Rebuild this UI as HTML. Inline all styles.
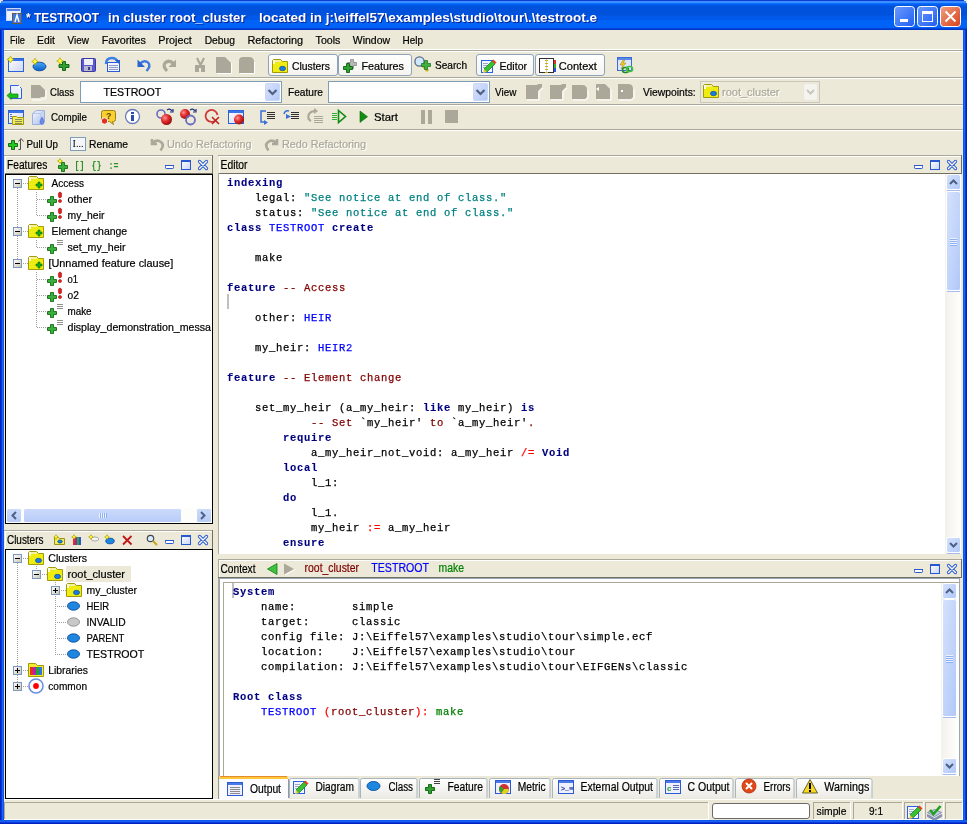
<!DOCTYPE html>
<html><head><meta charset="utf-8"><style>
html,body{margin:0;padding:0;background:#ece9d8;overflow:hidden}
svg{display:block;will-change:transform}
</style></head><body>
<svg width="967" height="824" viewBox="0 0 967 824" font-family="'Liberation Sans', sans-serif">
<rect x="0" y="0" width="967" height="824" fill="#ece9d8" />
<rect x="0" y="0" width="967" height="1" fill="#0a3fd4" />
<rect x="0" y="1" width="967" height="1" fill="#3d8bff" />
<rect x="0" y="2" width="967" height="1" fill="#3992ff" />
<rect x="0" y="3" width="967" height="1" fill="#0a6cff" />
<rect x="0" y="4" width="967" height="1" fill="#0260f0" />
<rect x="0" y="5" width="967" height="1" fill="#0058e4" />
<rect x="0" y="6" width="967" height="1" fill="#0052dc" />
<rect x="0" y="7" width="967" height="1" fill="#0052dc" />
<rect x="0" y="8" width="967" height="1" fill="#0052dc" />
<rect x="0" y="9" width="967" height="1" fill="#0052dc" />
<rect x="0" y="10" width="967" height="1" fill="#0052dc" />
<rect x="0" y="11" width="967" height="1" fill="#0052dc" />
<rect x="0" y="12" width="967" height="1" fill="#0052dc" />
<rect x="0" y="13" width="967" height="1" fill="#0052dc" />
<rect x="0" y="14" width="967" height="1" fill="#0052dc" />
<rect x="0" y="15" width="967" height="1" fill="#0054e2" />
<rect x="0" y="16" width="967" height="1" fill="#0059ea" />
<rect x="0" y="17" width="967" height="1" fill="#0059ea" />
<rect x="0" y="18" width="967" height="1" fill="#0059ea" />
<rect x="0" y="19" width="967" height="1" fill="#0059ea" />
<rect x="0" y="20" width="967" height="1" fill="#0063f8" />
<rect x="0" y="21" width="967" height="1" fill="#0063f8" />
<rect x="0" y="22" width="967" height="1" fill="#0063f8" />
<rect x="0" y="23" width="967" height="1" fill="#0063f8" />
<rect x="0" y="24" width="967" height="1" fill="#0063f8" />
<rect x="0" y="25" width="967" height="1" fill="#0063f8" />
<rect x="0" y="26" width="967" height="1" fill="#0063f8" />
<rect x="0" y="27" width="967" height="1" fill="#0060f4" />
<rect x="0" y="28" width="967" height="1" fill="#0046dc" />
<rect x="0" y="29" width="967" height="1" fill="#0035c6" />
<rect x="0" y="0" width="1" height="1" fill="#e8e4d4" />
<rect x="1" y="0" width="1" height="1" fill="#e8e4d4" />
<rect x="0" y="1" width="1" height="1" fill="#e8e4d4" />
<rect x="2" y="0" width="1" height="1" fill="#e8e4d4" />
<rect x="0" y="2" width="1" height="1" fill="#e8e4d4" />
<rect x="966" y="0" width="1" height="1" fill="#e8e4d4" />
<rect x="965" y="0" width="1" height="1" fill="#e8e4d4" />
<rect x="966" y="1" width="1" height="1" fill="#e8e4d4" />
<rect x="964" y="0" width="1" height="1" fill="#e8e4d4" />
<rect x="966" y="2" width="1" height="1" fill="#e8e4d4" />
<rect x="1" y="1" width="1" height="1" fill="#6a8de0" />
<rect x="965" y="1" width="1" height="1" fill="#6a8de0" />
<rect x="0" y="30" width="1" height="794" fill="#0020c0" />
<rect x="1" y="30" width="1" height="794" fill="#0838d8" />
<rect x="2" y="30" width="1" height="794" fill="#1a66f4" />
<rect x="3" y="30" width="1" height="794" fill="#0a58ec" />
<rect x="963" y="30" width="1" height="794" fill="#0a58ec" />
<rect x="964" y="30" width="1" height="794" fill="#1a66f4" />
<rect x="965" y="30" width="1" height="794" fill="#0838d8" />
<rect x="966" y="30" width="1" height="794" fill="#0020c0" />
<rect x="0" y="820" width="967" height="1" fill="#0a58ec" />
<rect x="0" y="821" width="967" height="1" fill="#1a60ee" />
<rect x="0" y="822" width="967" height="1" fill="#0838d8" />
<rect x="0" y="823" width="967" height="1" fill="#0020c0" />
<rect x="6.5" y="8.5" width="14" height="12" fill="#eef2ff" stroke="#c8d4f8"/>
<rect x="7" y="9" width="13" height="2" fill="#5a7fe0" />
<rect x="12.5" y="13.5" width="9" height="10" fill="#3a78e8" stroke="#6a5a40"/>
<path d="M15 22 L17 15 L19 22" stroke="#fff" stroke-width="1.4" fill="none"/>
<text x="27" y="23" font-size="13" font-weight="bold" fill="#0a1e8c" textLength="73" lengthAdjust="spacingAndGlyphs" >* TESTROOT</text>
<text x="109" y="23" font-size="13" font-weight="bold" fill="#0a1e8c" textLength="137.5" lengthAdjust="spacingAndGlyphs" >in cluster root_cluster</text>
<text x="260" y="23" font-size="13" font-weight="bold" fill="#0a1e8c" textLength="338" lengthAdjust="spacingAndGlyphs" >located in j:\eiffel57\examples\studio\tour\.\testroot.e</text>
<text x="26" y="22" font-size="13" font-weight="bold" fill="#ffffff" textLength="73" lengthAdjust="spacingAndGlyphs" >* TESTROOT</text>
<text x="108" y="22" font-size="13" font-weight="bold" fill="#ffffff" textLength="137.5" lengthAdjust="spacingAndGlyphs" >in cluster root_cluster</text>
<text x="259" y="22" font-size="13" font-weight="bold" fill="#ffffff" textLength="338" lengthAdjust="spacingAndGlyphs" >located in j:\eiffel57\examples\studio\tour\.\testroot.e</text>
<defs><linearGradient id="tb894" x1="0" y1="0" x2="1" y2="1"><stop offset="0" stop-color="#6c9cff"/><stop offset="1" stop-color="#1f5ef0"/></linearGradient></defs>
<rect x="894.5" y="6.5" width="20" height="20" rx="3" fill="url(#tb894)" stroke="#ffffff"/>
<defs><linearGradient id="tb917" x1="0" y1="0" x2="1" y2="1"><stop offset="0" stop-color="#6c9cff"/><stop offset="1" stop-color="#1f5ef0"/></linearGradient></defs>
<rect x="917.5" y="6.5" width="20" height="20" rx="3" fill="url(#tb917)" stroke="#ffffff"/>
<defs><linearGradient id="tb940" x1="0" y1="0" x2="1" y2="1"><stop offset="0" stop-color="#f0a080"/><stop offset="1" stop-color="#d8401a"/></linearGradient></defs>
<rect x="940.5" y="6.5" width="20" height="20" rx="3" fill="url(#tb940)" stroke="#ffffff"/>
<rect x="900" y="19" width="8" height="3" fill="#fff" />
<rect x="922.5" y="11.5" width="10" height="10" fill="none" stroke="#fff"/>
<rect x="922" y="11" width="11" height="3" fill="#fff" />
<path d="M945.5 11.5 L955.5 21.5 M955.5 11.5 L945.5 21.5" stroke="#fff" stroke-width="2"/>
<text x="10" y="44" font-size="11" stroke="#000" stroke-width="0.2" textLength="14.8" lengthAdjust="spacingAndGlyphs" >File</text>
<text x="37" y="44" font-size="11" stroke="#000" stroke-width="0.2" textLength="17.8" lengthAdjust="spacingAndGlyphs" >Edit</text>
<text x="67.5" y="44" font-size="11" stroke="#000" stroke-width="0.2" textLength="21.3" lengthAdjust="spacingAndGlyphs" >View</text>
<text x="101.7" y="44" font-size="11" stroke="#000" stroke-width="0.2" textLength="44.3" lengthAdjust="spacingAndGlyphs" >Favorites</text>
<text x="158.3" y="44" font-size="11" stroke="#000" stroke-width="0.2" textLength="33.5" lengthAdjust="spacingAndGlyphs" >Project</text>
<text x="204.7" y="44" font-size="11" stroke="#000" stroke-width="0.2" textLength="30.3" lengthAdjust="spacingAndGlyphs" >Debug</text>
<text x="247.4" y="44" font-size="11" stroke="#000" stroke-width="0.2" textLength="55.8" lengthAdjust="spacingAndGlyphs" >Refactoring</text>
<text x="315.6" y="44" font-size="11" stroke="#000" stroke-width="0.2" textLength="24.8" lengthAdjust="spacingAndGlyphs" >Tools</text>
<text x="352.8" y="44" font-size="11" stroke="#000" stroke-width="0.2" textLength="37.2" lengthAdjust="spacingAndGlyphs" >Window</text>
<text x="402.5" y="44" font-size="11" stroke="#000" stroke-width="0.2" textLength="20.5" lengthAdjust="spacingAndGlyphs" >Help</text>
<rect x="4" y="49" width="959" height="1" fill="#ffffff" />
<rect x="4" y="50" width="959" height="1" fill="#aca899" />
<rect x="4" y="51" width="959" height="1" fill="#ffffff" />
<rect x="4" y="77" width="959" height="1" fill="#aca899" />
<rect x="4" y="78" width="959" height="1" fill="#ffffff" />
<rect x="4" y="104" width="959" height="1" fill="#aca899" />
<rect x="4" y="105" width="959" height="1" fill="#ffffff" />
<rect x="4" y="129" width="959" height="1" fill="#aca899" />
<rect x="4" y="130" width="959" height="1" fill="#ffffff" />
<defs><linearGradient id="wbody" x1="0" y1="0" x2="1" y2="1"><stop offset="0" stop-color="#ffffff"/><stop offset="1" stop-color="#d0d4f4"/></linearGradient><linearGradient id="ellg" x1="0" y1="0" x2="0" y2="1"><stop offset="0" stop-color="#4aa8f8"/><stop offset="1" stop-color="#0a60c8"/></linearGradient></defs>
<rect x="8.5" y="58.5" width="15" height="13" fill="url(#wbody)" stroke="#2a62d8"/>
<rect x="9" y="59" width="14" height="2" fill="#3a72e8" />
<path d="M10.5 56.1 L11.69 58.31 L13.9 59.5 L11.69 60.69 L10.5 62.9 L9.31 60.69 L7.1 59.5 L9.31 58.31 Z" fill="#ffff40" stroke="#b0a000" stroke-width="0.7"/>
<ellipse cx="39.5" cy="66.5" rx="6.5" ry="4.3" fill="url(#ellg)" stroke="#0a4aa0" stroke-width="0.9"/>
<path d="M35 58.2 L36.155 60.345 L38.3 61.5 L36.155 62.655 L35 64.8 L33.845 62.655 L31.7 61.5 L33.845 60.345 Z" fill="#ffff40" stroke="#b0a000" stroke-width="0.7"/>
<path d="M62.5 61.5 h3 v3 h3.5 v3 h-3.5 v3 h-3 v-3 h-3.5 v-3 h3.5 z" fill="#30a030" stroke="#0a600a" stroke-width="0.9"/>
<path d="M60 57.7 L61.155 59.845 L63.3 61 L61.155 62.155 L60 64.3 L58.845 62.155 L56.7 61 L58.845 59.845 Z" fill="#ffff40" stroke="#b0a000" stroke-width="0.7"/>
<rect x="81.5" y="58.5" width="14" height="13" rx="1" fill="#5a5ad0" stroke="#3a3aa0"/>
<rect x="84" y="59" width="9" height="6" fill="#f0f0f8" />
<rect x="84" y="66" width="8" height="5" fill="#b8b8c8" />
<rect x="88" y="67" width="2" height="3" fill="#3a3aa0" />
<rect x="107.5" y="62.5" width="12" height="9" fill="#f4f6ff" stroke="#2a5ad8"/>
<rect x="109" y="65" width="9" height="1" fill="#8a9ac8" />
<rect x="109" y="67" width="9" height="1" fill="#8a9ac8" />
<rect x="109" y="69" width="9" height="1" fill="#8a9ac8" />
<path d="M106 64 q0 -6 6 -6 q4 0 6 4" stroke="#3a80e8" stroke-width="2.4" fill="none"/>
<path d="M115 60 h5 v5 z" fill="#2a62d0"/>
<path d="M139.5 64 q5 -5 9 -1 q2.5 3 -2 8" stroke="#3a78e0" stroke-width="2.4" fill="none"/>
<path d="M137.5 59.5 v7.5 h7.5 z" fill="#2a62d0"/>
<path d="M174 64 q-5 -5 -9 -1 q-2.5 3 2 8" stroke="#aca899" stroke-width="3.2" fill="none"/>
<path d="M176 59.5 v7.5 h-7.5 z" fill="#aca899"/>
<path d="M197 58 l3.5 7 l3.5 -7" stroke="#aca899" stroke-width="2.2" fill="none"/>
<rect x="195" y="65" width="4" height="7" fill="#aca899"/><rect x="201" y="65" width="4" height="7" fill="#aca899"/><rect x="198" y="65" width="4" height="3" fill="#aca899"/>
<path d="M216 57 h9 l6 6 v10 h-15 z" fill="#aca899"/>
<rect x="217" y="73" width="15" height="1" fill="#ffffff" />
<rect x="231" y="63" width="1" height="10" fill="#ffffff" />
<path d="M239 61 q0 -4 4 -4 h6 q5 0 5 5 v11 h-15 z" fill="#aca899"/>
<rect x="240" y="73" width="15" height="1" fill="#ffffff" />
<rect x="254" y="62" width="1" height="11" fill="#ffffff" />
<defs><linearGradient id="tg268" x1="0" y1="0" x2="0" y2="1"><stop offset="0" stop-color="#ffffff"/><stop offset="1" stop-color="#f4f3ee"/></linearGradient></defs>
<rect x="268.5" y="54.5" width="69" height="21" rx="2.5" fill="url(#tg268)" stroke="#8ea3bb"/>
<path d="M272.5 72.5 V60.5 L273.5 59.5 H280.5 L282.5 61.5 H287.5 V72.5 Z" fill="#eeec10" stroke="#a29a08"/>
<rect x="273" y="60" width="8" height="2" fill="#f4f0a0" />
<rect x="273" y="60" width="2" height="4" fill="#fcfce0" />
<ellipse cx="282.5" cy="68.5" rx="3" ry="2.2" fill="#1a7ae0" stroke="#0a4aa8" stroke-width="0.7"/>
<text x="292" y="70" font-size="11" stroke="#000" stroke-width="0.2" textLength="38" lengthAdjust="spacingAndGlyphs" >Clusters</text>
<defs><linearGradient id="tg338" x1="0" y1="0" x2="0" y2="1"><stop offset="0" stop-color="#ffffff"/><stop offset="1" stop-color="#f4f3ee"/></linearGradient></defs>
<rect x="338.5" y="54.5" width="73" height="21" rx="2.5" fill="url(#tg338)" stroke="#8ea3bb"/>
<path d="M350.5 59.5 h3 v3 h3 v3 h-3 v3 h-3 v-3 h-3 v-3 h3 z" fill="#b8b8b8" stroke="#8a8a8a" stroke-width="0.8"/>
<path d="M346.5 63.5 h3 v3 h3 v3 h-3 v3 h-3 v-3 h-3 v-3 h3 z" fill="#30a030" stroke="#0a600a" stroke-width="0.9"/>
<text x="361.4" y="70" font-size="11" stroke="#000" stroke-width="0.2" textLength="42.6" lengthAdjust="spacingAndGlyphs" >Features</text>
<path d="M422 65 l6 6" stroke="#c8b818" stroke-width="2.8"/>
<circle cx="419.5" cy="61.5" r="4.6" fill="#d0e8ff" stroke="#5a6a80" stroke-width="1.3"/>
<path d="M424.5 60.5 h3 v3 h3 v3 h-3 v3 h-3 v-3 h-3 v-3 h3 z" fill="#40b040" stroke="#207a20" stroke-width="0.8"/>
<text x="435" y="69" font-size="11" stroke="#000" stroke-width="0.2" textLength="32" lengthAdjust="spacingAndGlyphs" >Search</text>
<defs><linearGradient id="tg476" x1="0" y1="0" x2="0" y2="1"><stop offset="0" stop-color="#ffffff"/><stop offset="1" stop-color="#f4f3ee"/></linearGradient></defs>
<rect x="476.5" y="54.5" width="57" height="21" rx="2.5" fill="url(#tg476)" stroke="#8ea3bb"/>
<rect x="481.5" y="60.5" width="11" height="12" fill="#f2f4ff" stroke="#2a62e0"/>
<rect x="483" y="63" width="5" height="1" fill="#a0a8c8" />
<rect x="483" y="65" width="5" height="1" fill="#a0a8c8" />
<rect x="483" y="67" width="5" height="1" fill="#a0a8c8" />
<path d="M484 69 L492 61 L495 64 L487 72 Z" fill="#38c030" stroke="#107a10" stroke-width="0.7"/>
<path d="M484 69 L487 72 L483 73 Z" fill="#e8d040"/>
<path d="M492 61 L493.5 59.5 L496.5 62.5 L495 64 Z" fill="#e84020"/>
<text x="499.5" y="70" font-size="11" stroke="#000" stroke-width="0.2" textLength="27.5" lengthAdjust="spacingAndGlyphs" >Editor</text>
<defs><linearGradient id="tg535" x1="0" y1="0" x2="0" y2="1"><stop offset="0" stop-color="#ffffff"/><stop offset="1" stop-color="#f4f3ee"/></linearGradient></defs>
<rect x="535.5" y="54.5" width="69" height="21" rx="2.5" fill="url(#tg535)" stroke="#8ea3bb"/>
<rect x="539.5" y="58.5" width="14" height="14" fill="#ffffff" stroke="#303030"/>
<rect x="546" y="59" width="1" height="13" fill="#d0d0d0" />
<rect x="545" y="60" width="3" height="1" fill="#c8b020" />
<rect x="545" y="63" width="3" height="1" fill="#c8b020" />
<rect x="545" y="66" width="3" height="1" fill="#c8b020" />
<rect x="545" y="69" width="3" height="1" fill="#c8b020" />
<rect x="545" y="72" width="3" height="1" fill="#c8b020" />
<rect x="554" y="60" width="2" height="4" fill="#e03030" />
<rect x="554" y="64" width="2" height="4" fill="#30b030" />
<rect x="554" y="68" width="2" height="4" fill="#3050e0" />
<text x="558.8" y="70" font-size="11" stroke="#000" stroke-width="0.2" textLength="38.1" lengthAdjust="spacingAndGlyphs" >Context</text>
<rect x="617.5" y="57.5" width="14" height="13" fill="#dce6ff" stroke="#3a6ad8"/>
<rect x="618" y="58" width="13" height="2" fill="#5a8ae8" />
<path d="M623 60 l-3 5 h3 l-2 4 l5 -6 h-3 l2 -3 z" fill="#f0d020" stroke="#a08010" stroke-width="0.5"/>
<rect x="622.5" y="67.5" width="6" height="5" rx="2.5" fill="none" stroke="#208a20" stroke-width="1.6"/>
<rect x="626.5" y="66.5" width="6" height="5" rx="2.5" fill="none" stroke="#40c040" stroke-width="1.6"/>
<path d="M10.5 85.5 h8 l3 3 v10 h-11 z" fill="#eef0ff" stroke="#2a62e0"/>
<rect x="18" y="86" width="2" height="2" fill="#ffffff" />
<path d="M7 95.5 l4 -3.5 v2 h7 v3.5 h-7 v2 z" fill="#18c018" stroke="#0a800a" stroke-width="0.7"/>
<path d="M31 85 h9 l5 5 v6 l-1 1 h-3 l-1 1 h-9 z" fill="#aca899"/>
<path d="M32 100 h9 l1 -1 h3 l1 -1 v-8" stroke="#fff" fill="none"/>
<text x="50" y="96" font-size="11" stroke="#000" stroke-width="0.2" textLength="24" lengthAdjust="spacingAndGlyphs" >Class</text>
<rect x="80" y="81" width="202" height="22" fill="#ffffff" />
<rect x="80" y="81" width="202" height="1" fill="#7f9db9" />
<rect x="80" y="102" width="202" height="1" fill="#7f9db9" />
<rect x="80" y="81" width="1" height="22" fill="#7f9db9" />
<rect x="281" y="81" width="1" height="22" fill="#7f9db9" />
<defs><linearGradient id="cb80" x1="0" y1="0" x2="1" y2="1"><stop offset="0" stop-color="#d8e2fc"/><stop offset="1" stop-color="#b4c8f6"/></linearGradient></defs>
<rect x="265.5" y="83.5" width="14" height="17" rx="1.5" fill="url(#cb80)" stroke="#c8d6f8"/>
<path d="M268.5 90 l4 4 l4 -4" stroke="#4d6185" stroke-width="2.2" fill="none"/>
<text x="103.5" y="96" font-size="11" stroke="#000" stroke-width="0.2" textLength="57.8" lengthAdjust="spacingAndGlyphs" >TESTROOT</text>
<text x="288" y="96" font-size="11" stroke="#000" stroke-width="0.2" textLength="35" lengthAdjust="spacingAndGlyphs" >Feature</text>
<rect x="328" y="81" width="162" height="22" fill="#ffffff" />
<rect x="328" y="81" width="162" height="1" fill="#7f9db9" />
<rect x="328" y="102" width="162" height="1" fill="#7f9db9" />
<rect x="328" y="81" width="1" height="22" fill="#7f9db9" />
<rect x="489" y="81" width="1" height="22" fill="#7f9db9" />
<defs><linearGradient id="cb328" x1="0" y1="0" x2="1" y2="1"><stop offset="0" stop-color="#d8e2fc"/><stop offset="1" stop-color="#b4c8f6"/></linearGradient></defs>
<rect x="473.5" y="83.5" width="14" height="17" rx="1.5" fill="url(#cb328)" stroke="#c8d6f8"/>
<path d="M476.5 90 l4 4 l4 -4" stroke="#4d6185" stroke-width="2.2" fill="none"/>
<text x="495" y="96" font-size="11" stroke="#000" stroke-width="0.2" textLength="21.3" lengthAdjust="spacingAndGlyphs" >View</text>
<path d="M526 85 h11 l1 -1 h4 v3 l-4 4 v8 h-12 z" fill="#aca899"/>
<path d="M527 100 h12 v-8 l4 -4" stroke="#fff" fill="none"/>
<path d="M550 85 h11 l1 -1 h4 v3 l-4 4 v8 h-12 z" fill="#aca899"/>
<path d="M551 100 h12 v-8 l4 -4" stroke="#fff" fill="none"/>
<path d="M572 85 h10 q5 0 5 5 v7 l-2 2 h-13 z" fill="#aca899"/>
<path d="M573 100 h13 l2 -2 v-8" stroke="#fff" fill="none"/>
<path d="M596 84 h9 l5 5 v10 h-14 z" fill="#aca899"/>
<path d="M597 100 h14 v-11" stroke="#fff" fill="none"/>
<path d="M596 89 l3 -2 v4 z" fill="#fff"/>
<path d="M618 84 h10 q5 0 5 5 v8 l-2 2 h-13 z" fill="#aca899"/>
<path d="M619 100 h13 l2 -2 v-9" stroke="#fff" fill="none"/>
<rect x="621" y="90" width="2" height="2" fill="#fff" />
<text x="643" y="96" font-size="11" stroke="#000" stroke-width="0.2" textLength="52.7" lengthAdjust="spacingAndGlyphs" >Viewpoints:</text>
<rect x="700" y="81" width="120" height="22" fill="#ece9d8" />
<rect x="700" y="81" width="120" height="1" fill="#c9c7ba" />
<rect x="700" y="102" width="120" height="1" fill="#c9c7ba" />
<rect x="700" y="81" width="1" height="22" fill="#c9c7ba" />
<rect x="819" y="81" width="1" height="22" fill="#c9c7ba" />
<rect x="803.5" y="83.5" width="14" height="17" rx="1.5" fill="#f4f3ee" stroke="#e8e6dc"/>
<path d="M807 90 l3.5 3.5 l3.5 -3.5" stroke="#c9c7ba" stroke-width="2" fill="none"/>
<path d="M703.5 97.5 V85.5 L704.5 84.5 H711.5 L713.5 86.5 H718.5 V97.5 Z" fill="#eeec10" stroke="#a29a08"/>
<rect x="704" y="85" width="8" height="2" fill="#f4f0a0" />
<rect x="704" y="85" width="2" height="4" fill="#fcfce0" />
<ellipse cx="713.5" cy="93.5" rx="3" ry="2.2" fill="#1a7ae0" stroke="#0a4aa8" stroke-width="0.7"/>
<text x="723" y="97" font-size="11" fill="#ffffff" stroke="#ffffff" stroke-width="0.2" textLength="57.5" lengthAdjust="spacingAndGlyphs" >root_cluster</text>
<text x="722" y="96" font-size="11" fill="#aca899" stroke="#aca899" stroke-width="0.2" textLength="57.5" lengthAdjust="spacingAndGlyphs" >root_cluster</text>
<rect x="8.5" y="110.5" width="15" height="13" fill="url(#wbody)" stroke="#2a62d8"/>
<rect x="9" y="111" width="14" height="2" fill="#3a72e8" />
<rect x="10" y="114" width="2" height="1" fill="#4a6ac8" />
<rect x="10" y="116" width="2" height="1" fill="#4a6ac8" />
<rect x="10" y="118" width="2" height="1" fill="#4a6ac8" />
<path d="M12.5 124.5 V116.5 h4 l1 1 h6 v7 z" fill="#eeec60" stroke="#a29a08"/>
<rect x="15" y="119" width="7" height="1" fill="#8a8a50" />
<rect x="15" y="121" width="7" height="1" fill="#8a8a50" />
<rect x="15" y="123" width="7" height="1" fill="#8a8a50" />
<defs><linearGradient id="cube" x1="0" y1="0" x2="1" y2="1"><stop offset="0" stop-color="#f4f8ff"/><stop offset="1" stop-color="#a8bce8"/></linearGradient></defs>
<path d="M32.5 113.5 l4 -3 h8 v11 l-4 3 h-8 z" fill="url(#cube)" stroke="#9ab0e0"/>
<path d="M32.5 113.5 h8 l4 -3 M40.5 113.5 v11" stroke="#b8c8f0" fill="none"/>
<path d="M42 117 q-2.5 4 -2 5.5 a2 2 0 0 0 4 0 q0.5 -1.5 -2 -5.5 z" fill="#6a8ae8" stroke="#4a6ad0" stroke-width="0.5"/>
<text x="51" y="121" font-size="11" stroke="#000" stroke-width="0.2" textLength="36" lengthAdjust="spacingAndGlyphs" >Compile</text>
<path d="M101.5 112.5 q0 -2 2 -2 h10 q2 0 2 2 v7 q0 2 -2 2 h-1 l1 3 l-4 -3 h-6 q-2 0 -2 -2 z" fill="#f8d030" stroke="#a08010"/>
<text x="106" y="119" font-size="9" font-weight="bold" fill="#604000" >?</text>
<circle cx="104.5" cy="121" r="3.2" fill="#e03020" stroke="#fff" stroke-width="0.9"/>
<circle cx="132.5" cy="116.5" r="7" fill="#ffffff" stroke="#6a7ab8" stroke-width="1.3"/>
<rect x="131" y="112" width="3" height="2" fill="#2a4ab0" />
<rect x="131" y="115" width="3" height="6" fill="#2a4ab0" />
<defs><radialGradient id="rball" cx="0.35" cy="0.35" r="0.7"><stop offset="0" stop-color="#ff9090"/><stop offset="0.5" stop-color="#e02828"/><stop offset="1" stop-color="#901010"/></radialGradient></defs>
<circle cx="161" cy="114" r="4" fill="none" stroke="#6a6ac0" stroke-width="1.6"/>
<circle cx="166.5" cy="119.5" r="5.5" fill="url(#rball)"/>
<path d="M167 110 q3 -2 5 1 M170 112 h3 v-3" stroke="#203080" stroke-width="1.2" fill="none"/>
<circle cx="185" cy="114" r="5" fill="url(#rball)"/>
<circle cx="190.5" cy="120" r="4.5" fill="none" stroke="#6a6ac0" stroke-width="1.8"/>
<path d="M190 110 q3 -2 5 1 M193 112 h3 v-3" stroke="#203080" stroke-width="1.2" fill="none"/>
<path d="M216 120 a6 6 0 1 1 1.5 -5" stroke="#d03838" stroke-width="1.8" fill="none"/>
<path d="M212 117 l7 7 M219 117 l-7 7" stroke="#c02020" stroke-width="1.6"/>
<rect x="228.5" y="110.5" width="15" height="13" fill="url(#wbody)" stroke="#2a62d8"/>
<rect x="229" y="111" width="14" height="2" fill="#3a72e8" />
<circle cx="239" cy="119.5" r="5" fill="url(#rball)"/>
<rect x="267" y="112" width="8" height="1" fill="#303030" />
<rect x="267" y="114" width="8" height="1" fill="#303030" />
<rect x="267" y="116" width="8" height="1" fill="#303030" />
<rect x="267" y="118" width="8" height="1" fill="#303030" />
<rect x="291" y="112" width="8" height="1" fill="#303030" />
<rect x="291" y="114" width="8" height="1" fill="#303030" />
<rect x="291" y="116" width="8" height="1" fill="#303030" />
<rect x="291" y="118" width="8" height="1" fill="#303030" />
<path d="M266 111 h-5 v11 h5" stroke="#3a70d8" stroke-width="1.5" fill="none"/>
<path d="M264 120 l4 2.5 l-4 2.5 z" fill="#3a70d8"/>
<path d="M284 114 q1 -4 5 -3" stroke="#3a70d8" stroke-width="1.5" fill="none"/>
<path d="M286 114 l5 2.5 l-5 2.5 z" fill="#3a70d8"/>
<rect x="314" y="116" width="9" height="1" fill="#aca899" />
<rect x="314" y="118" width="9" height="1" fill="#aca899" />
<rect x="314" y="120" width="9" height="1" fill="#aca899" />
<rect x="314" y="122" width="9" height="1" fill="#aca899" />
<path d="M311 121 q-4 -2 -2 -7 q2 -3 6 -3" stroke="#aca899" stroke-width="2.2" fill="none"/>
<path d="M314 108 l4 3 l-4 3 z" fill="#aca899"/>
<rect x="332" y="113" width="5" height="1" fill="#30b030" />
<rect x="332" y="115" width="5" height="1" fill="#30b030" />
<rect x="332" y="117" width="5" height="1" fill="#30b030" />
<rect x="332" y="119" width="5" height="1" fill="#30b030" />
<path d="M338.5 110.5 l7 6 l-7 6 z" fill="none" stroke="#108a10" stroke-width="1.6"/>
<path d="M360 111 l7.5 5.7 l-7.5 5.7 z" fill="#109010" stroke="#0a600a" stroke-width="0.6"/>
<text x="374" y="121" font-size="11" stroke="#000" stroke-width="0.2" textLength="24" lengthAdjust="spacingAndGlyphs" >Start</text>
<rect x="421" y="110" width="4" height="14" fill="#aca899" />
<rect x="428" y="110" width="4" height="14" fill="#aca899" />
<rect x="445" y="110" width="13" height="13" fill="#aca899" />
<path d="M11.5 140.5 h3 v3 h3 v3 h-3 v3 h-3 v-3 h-3 v-3 h3 z" fill="#20c820" stroke="#0a600a" stroke-width="0.9"/>
<path d="M18.5 149.5 h2 v-10" stroke="#505050" stroke-width="1" fill="none"/>
<path d="M18.5 141.5 l2.5 -3 l2.5 3" stroke="#505050" stroke-width="1" fill="none"/>
<text x="26.5" y="148" font-size="11" stroke="#000" stroke-width="0.2" textLength="31.5" lengthAdjust="spacingAndGlyphs" >Pull Up</text>
<rect x="70.5" y="137.5" width="15" height="13" fill="#f4f6fa" stroke="#7f9db9"/>
<text x="72.5" y="147" font-size="10" font-family="Liberation Serif" textLength="11" lengthAdjust="spacingAndGlyphs" >I...</text>
<text x="89" y="148" font-size="11" stroke="#000" stroke-width="0.2" textLength="39" lengthAdjust="spacingAndGlyphs" >Rename</text>
<path d="M152 139 v5 h5 M152.5 143.5 q4 -5 9 -1 q3 3 -1 8" stroke="#aca899" stroke-width="2.6" fill="none"/>
<text x="168" y="149" font-size="11" fill="#ffffff" stroke="#ffffff" stroke-width="0.2" textLength="84.6" lengthAdjust="spacingAndGlyphs" >Undo Refactoring</text>
<text x="167" y="148" font-size="11" fill="#aca899" stroke="#aca899" stroke-width="0.2" textLength="84.6" lengthAdjust="spacingAndGlyphs" >Undo Refactoring</text>
<path d="M277 139 v5 h-5 M276.5 143.5 q-4 -5 -9 -1 q-3 3 1 8" stroke="#aca899" stroke-width="2.6" fill="none"/>
<text x="283" y="149" font-size="11" fill="#ffffff" stroke="#ffffff" stroke-width="0.2" textLength="84" lengthAdjust="spacingAndGlyphs" >Redo Refactoring</text>
<text x="282" y="148" font-size="11" fill="#aca899" stroke="#aca899" stroke-width="0.2" textLength="84" lengthAdjust="spacingAndGlyphs" >Redo Refactoring</text>
<rect x="4" y="155" width="209" height="1" fill="#aca899" />
<rect x="5" y="156" width="207" height="1" fill="#ffffff" />
<rect x="5" y="156" width="1" height="17" fill="#ffffff" />
<rect x="212" y="155" width="1" height="18" fill="#716f64" />
<text x="7" y="169" font-size="12" stroke="#000" stroke-width="0.2" textLength="40.3" lengthAdjust="spacingAndGlyphs" >Features</text>
<path d="M61.5 162.5 h3 v3 h3 v3 h-3 v3 h-3 v-3 h-3 v-3 h3 z" fill="#3cb03c" stroke="#0e700e" stroke-width="0.9"/>
<path d="M60 158.5 L60.875 160.125 L62.5 161 L60.875 161.875 L60 163.5 L59.125 161.875 L57.5 161 L59.125 160.125 Z" fill="#ffff40" stroke="#b0a000" stroke-width="0.7"/>
<text x="74.5" y="169" font-size="11" font-family="Liberation Mono" font-weight="bold" fill="#2a902a" textLength="10" lengthAdjust="spacingAndGlyphs" >[]</text>
<text x="91.5" y="169" font-size="11" font-family="Liberation Mono" font-weight="bold" fill="#2a902a" textLength="10" lengthAdjust="spacingAndGlyphs" >{}</text>
<text x="108.5" y="169" font-size="11" font-family="Liberation Mono" font-weight="bold" fill="#2a902a" textLength="10" lengthAdjust="spacingAndGlyphs" >:=</text>
<rect x="165.5" y="165.5" width="8" height="3" rx="0.8" fill="#ffffff" stroke="#2858d0"/>
<rect x="165" y="165" width="9" height="1" fill="#2858d0" />
<defs><linearGradient id="mx181_160" x1="0" y1="0" x2="1" y2="1"><stop offset="0" stop-color="#ffffff"/><stop offset="1" stop-color="#c8d4f8"/></linearGradient></defs>
<rect x="181.5" y="160.5" width="9" height="9" fill="url(#mx181_160)" stroke="#2858d0"/>
<rect x="182" y="161" width="8" height="1" fill="#2858d0" />
<path d="M199.5 161.5 L206.5 168.5 M206.5 161.5 L199.5 168.5" stroke="#2858d0" stroke-width="3.2" stroke-linecap="round"/>
<path d="M199.5 161.5 L206.5 168.5 M206.5 161.5 L199.5 168.5" stroke="#ffffff" stroke-width="1.4" stroke-linecap="round"/>
<rect x="5" y="173" width="208" height="1" fill="#000000" />
<rect x="5" y="523" width="208" height="1" fill="#000000" />
<rect x="5" y="173" width="1" height="351" fill="#000000" />
<rect x="212" y="173" width="1" height="351" fill="#000000" />
<rect x="5" y="173" width="208" height="1" fill="#716f64" />
<rect x="5" y="174" width="208" height="1" fill="#000000" />
<rect x="6" y="175" width="206" height="348" fill="#ffffff" />
<rect x="6" y="508" width="206" height="15" fill="#fdfdfa" />
<defs><linearGradient id="hs508" x1="0" y1="0" x2="0" y2="1"><stop offset="0" stop-color="#cddbfb"/><stop offset="1" stop-color="#b6cbf7"/></linearGradient></defs>
<rect x="6.5" y="508.5" width="15" height="14" rx="2" fill="url(#hs508)" stroke="#ffffff"/>
<path d="M16 512 l-3.5 3.5 l3.5 3.5" stroke="#4d6185" stroke-width="2" fill="none"/>
<rect x="196.5" y="508.5" width="15" height="14" rx="2" fill="url(#hs508)" stroke="#ffffff"/>
<path d="M201 512 l3.5 3.5 l-3.5 3.5" stroke="#4d6185" stroke-width="2" fill="none"/>
<rect x="23.5" y="508.5" width="158" height="14" rx="2" fill="url(#hs508)" stroke="#ffffff"/>
<rect x="99" y="513" width="1" height="5" fill="#eef3ff" />
<rect x="100" y="513" width="1" height="5" fill="#8cb0f8" />
<rect x="101" y="513" width="1" height="5" fill="#eef3ff" />
<rect x="102" y="513" width="1" height="5" fill="#8cb0f8" />
<rect x="103" y="513" width="1" height="5" fill="#eef3ff" />
<rect x="104" y="513" width="1" height="5" fill="#8cb0f8" />
<rect x="105" y="513" width="1" height="5" fill="#eef3ff" />
<rect x="106" y="513" width="1" height="5" fill="#8cb0f8" />
<clipPath id="ftclip"><rect x="6" y="174" width="206" height="334"/></clipPath><g clip-path="url(#ftclip)">
<rect x="17" y="188" width="1" height="1" fill="#a0a0a0" />
<rect x="17" y="190" width="1" height="1" fill="#a0a0a0" />
<rect x="17" y="192" width="1" height="1" fill="#a0a0a0" />
<rect x="17" y="194" width="1" height="1" fill="#a0a0a0" />
<rect x="17" y="196" width="1" height="1" fill="#a0a0a0" />
<rect x="17" y="198" width="1" height="1" fill="#a0a0a0" />
<rect x="17" y="200" width="1" height="1" fill="#a0a0a0" />
<rect x="17" y="202" width="1" height="1" fill="#a0a0a0" />
<rect x="17" y="204" width="1" height="1" fill="#a0a0a0" />
<rect x="17" y="206" width="1" height="1" fill="#a0a0a0" />
<rect x="17" y="208" width="1" height="1" fill="#a0a0a0" />
<rect x="17" y="210" width="1" height="1" fill="#a0a0a0" />
<rect x="17" y="212" width="1" height="1" fill="#a0a0a0" />
<rect x="17" y="214" width="1" height="1" fill="#a0a0a0" />
<rect x="17" y="216" width="1" height="1" fill="#a0a0a0" />
<rect x="17" y="218" width="1" height="1" fill="#a0a0a0" />
<rect x="17" y="220" width="1" height="1" fill="#a0a0a0" />
<rect x="17" y="222" width="1" height="1" fill="#a0a0a0" />
<rect x="17" y="224" width="1" height="1" fill="#a0a0a0" />
<rect x="17" y="226" width="1" height="1" fill="#a0a0a0" />
<rect x="17" y="228" width="1" height="1" fill="#a0a0a0" />
<rect x="17" y="230" width="1" height="1" fill="#a0a0a0" />
<rect x="17" y="232" width="1" height="1" fill="#a0a0a0" />
<rect x="17" y="234" width="1" height="1" fill="#a0a0a0" />
<rect x="17" y="236" width="1" height="1" fill="#a0a0a0" />
<rect x="17" y="238" width="1" height="1" fill="#a0a0a0" />
<rect x="17" y="240" width="1" height="1" fill="#a0a0a0" />
<rect x="17" y="242" width="1" height="1" fill="#a0a0a0" />
<rect x="17" y="244" width="1" height="1" fill="#a0a0a0" />
<rect x="17" y="246" width="1" height="1" fill="#a0a0a0" />
<rect x="17" y="248" width="1" height="1" fill="#a0a0a0" />
<rect x="17" y="250" width="1" height="1" fill="#a0a0a0" />
<rect x="17" y="252" width="1" height="1" fill="#a0a0a0" />
<rect x="17" y="254" width="1" height="1" fill="#a0a0a0" />
<rect x="17" y="256" width="1" height="1" fill="#a0a0a0" />
<rect x="17" y="258" width="1" height="1" fill="#a0a0a0" />
<rect x="17" y="260" width="1" height="1" fill="#a0a0a0" />
<rect x="17" y="262" width="1" height="1" fill="#a0a0a0" />
<rect x="17" y="264" width="1" height="1" fill="#a0a0a0" />
<rect x="17" y="266" width="1" height="1" fill="#a0a0a0" />
<defs><linearGradient id="ex13_179" x1="0" y1="0" x2="1" y2="1"><stop offset="0" stop-color="#ffffff"/><stop offset="1" stop-color="#c8c4b0"/></linearGradient></defs>
<rect x="13.5" y="179.5" width="8" height="8" fill="url(#ex13_179)" stroke="#7a98c0"/>
<rect x="15" y="183" width="5" height="1" fill="#000" />
<rect x="23" y="183" width="1" height="1" fill="#a0a0a0" />
<rect x="25" y="183" width="1" height="1" fill="#a0a0a0" />
<rect x="27" y="183" width="1" height="1" fill="#a0a0a0" />
<path d="M28.5 189.5 V177.5 L29.5 176.5 H36.5 L38.5 178.5 H43.5 V189.5 Z" fill="#eeec10" stroke="#a29a08"/>
<rect x="29" y="177" width="8" height="2" fill="#f4f0a0" />
<rect x="29" y="177" width="2" height="4" fill="#fcfce0" />
<path d="M38 182 h2 v2 h2 v2 h-2 v2 h-2 v-2 h-2 v-2 h2 z" fill="#18a818" stroke="#0a700a" stroke-width="0.6"/>
<text x="51.6" y="187" font-size="11" stroke="#000" stroke-width="0.2" textLength="32.4" lengthAdjust="spacingAndGlyphs" >Access</text>
<rect x="37" y="199" width="1" height="1" fill="#a0a0a0" />
<rect x="39" y="199" width="1" height="1" fill="#a0a0a0" />
<rect x="41" y="199" width="1" height="1" fill="#a0a0a0" />
<rect x="43" y="199" width="1" height="1" fill="#a0a0a0" />
<rect x="45" y="199" width="1" height="1" fill="#a0a0a0" />
<path d="M50.5 196.5 h3 v3 h3 v3 h-3 v3 h-3 v-3 h-3 v-3 h3 z" fill="#3cb03c" stroke="#0e700e" stroke-width="0.9"/>
<ellipse cx="60" cy="195" rx="1.7" ry="3" fill="#e02020" stroke="#901010" stroke-width="0.5"/>
<circle cx="60" cy="201" r="1.6" fill="#e02020" stroke="#901010" stroke-width="0.5"/>
<text x="67.5" y="203" font-size="11" stroke="#000" stroke-width="0.2" textLength="24.6" lengthAdjust="spacingAndGlyphs" >other</text>
<rect x="37" y="215" width="1" height="1" fill="#a0a0a0" />
<rect x="39" y="215" width="1" height="1" fill="#a0a0a0" />
<rect x="41" y="215" width="1" height="1" fill="#a0a0a0" />
<rect x="43" y="215" width="1" height="1" fill="#a0a0a0" />
<rect x="45" y="215" width="1" height="1" fill="#a0a0a0" />
<path d="M50.5 212.5 h3 v3 h3 v3 h-3 v3 h-3 v-3 h-3 v-3 h3 z" fill="#3cb03c" stroke="#0e700e" stroke-width="0.9"/>
<ellipse cx="60" cy="211" rx="1.7" ry="3" fill="#e02020" stroke="#901010" stroke-width="0.5"/>
<circle cx="60" cy="217" r="1.6" fill="#e02020" stroke="#901010" stroke-width="0.5"/>
<text x="67.5" y="219" font-size="11" stroke="#000" stroke-width="0.2" textLength="36.9" lengthAdjust="spacingAndGlyphs" >my_heir</text>
<defs><linearGradient id="ex13_227" x1="0" y1="0" x2="1" y2="1"><stop offset="0" stop-color="#ffffff"/><stop offset="1" stop-color="#c8c4b0"/></linearGradient></defs>
<rect x="13.5" y="227.5" width="8" height="8" fill="url(#ex13_227)" stroke="#7a98c0"/>
<rect x="15" y="231" width="5" height="1" fill="#000" />
<rect x="23" y="231" width="1" height="1" fill="#a0a0a0" />
<rect x="25" y="231" width="1" height="1" fill="#a0a0a0" />
<rect x="27" y="231" width="1" height="1" fill="#a0a0a0" />
<path d="M28.5 237.5 V225.5 L29.5 224.5 H36.5 L38.5 226.5 H43.5 V237.5 Z" fill="#eeec10" stroke="#a29a08"/>
<rect x="29" y="225" width="8" height="2" fill="#f4f0a0" />
<rect x="29" y="225" width="2" height="4" fill="#fcfce0" />
<path d="M38 230 h2 v2 h2 v2 h-2 v2 h-2 v-2 h-2 v-2 h2 z" fill="#18a818" stroke="#0a700a" stroke-width="0.6"/>
<text x="51.6" y="235" font-size="11" stroke="#000" stroke-width="0.2" textLength="75.6" lengthAdjust="spacingAndGlyphs" >Element change</text>
<rect x="37" y="247" width="1" height="1" fill="#a0a0a0" />
<rect x="39" y="247" width="1" height="1" fill="#a0a0a0" />
<rect x="41" y="247" width="1" height="1" fill="#a0a0a0" />
<rect x="43" y="247" width="1" height="1" fill="#a0a0a0" />
<rect x="45" y="247" width="1" height="1" fill="#a0a0a0" />
<path d="M50.5 244.5 h3 v3 h3 v3 h-3 v3 h-3 v-3 h-3 v-3 h3 z" fill="#3cb03c" stroke="#0e700e" stroke-width="0.9"/>
<rect x="57" y="240" width="6" height="1" fill="#909090" />
<rect x="57" y="242" width="6" height="1" fill="#909090" />
<rect x="57" y="244" width="6" height="1" fill="#909090" />
<text x="67.5" y="251" font-size="11" stroke="#000" stroke-width="0.2" textLength="58" lengthAdjust="spacingAndGlyphs" >set_my_heir</text>
<defs><linearGradient id="ex13_259" x1="0" y1="0" x2="1" y2="1"><stop offset="0" stop-color="#ffffff"/><stop offset="1" stop-color="#c8c4b0"/></linearGradient></defs>
<rect x="13.5" y="259.5" width="8" height="8" fill="url(#ex13_259)" stroke="#7a98c0"/>
<rect x="15" y="263" width="5" height="1" fill="#000" />
<rect x="23" y="263" width="1" height="1" fill="#a0a0a0" />
<rect x="25" y="263" width="1" height="1" fill="#a0a0a0" />
<rect x="27" y="263" width="1" height="1" fill="#a0a0a0" />
<path d="M28.5 269.5 V257.5 L29.5 256.5 H36.5 L38.5 258.5 H43.5 V269.5 Z" fill="#eeec10" stroke="#a29a08"/>
<rect x="29" y="257" width="8" height="2" fill="#f4f0a0" />
<rect x="29" y="257" width="2" height="4" fill="#fcfce0" />
<path d="M38 262 h2 v2 h2 v2 h-2 v2 h-2 v-2 h-2 v-2 h2 z" fill="#18a818" stroke="#0a700a" stroke-width="0.6"/>
<text x="48.4" y="267" font-size="11" stroke="#000" stroke-width="0.2" textLength="124.8" lengthAdjust="spacingAndGlyphs" >[Unnamed feature clause]</text>
<rect x="37" y="279" width="1" height="1" fill="#a0a0a0" />
<rect x="39" y="279" width="1" height="1" fill="#a0a0a0" />
<rect x="41" y="279" width="1" height="1" fill="#a0a0a0" />
<rect x="43" y="279" width="1" height="1" fill="#a0a0a0" />
<rect x="45" y="279" width="1" height="1" fill="#a0a0a0" />
<path d="M50.5 276.5 h3 v3 h3 v3 h-3 v3 h-3 v-3 h-3 v-3 h3 z" fill="#3cb03c" stroke="#0e700e" stroke-width="0.9"/>
<ellipse cx="60" cy="275" rx="1.7" ry="3" fill="#e02020" stroke="#901010" stroke-width="0.5"/>
<circle cx="60" cy="281" r="1.6" fill="#e02020" stroke="#901010" stroke-width="0.5"/>
<text x="67.5" y="283" font-size="11" stroke="#000" stroke-width="0.2" textLength="10.6" lengthAdjust="spacingAndGlyphs" >o1</text>
<rect x="37" y="295" width="1" height="1" fill="#a0a0a0" />
<rect x="39" y="295" width="1" height="1" fill="#a0a0a0" />
<rect x="41" y="295" width="1" height="1" fill="#a0a0a0" />
<rect x="43" y="295" width="1" height="1" fill="#a0a0a0" />
<rect x="45" y="295" width="1" height="1" fill="#a0a0a0" />
<path d="M50.5 292.5 h3 v3 h3 v3 h-3 v3 h-3 v-3 h-3 v-3 h3 z" fill="#3cb03c" stroke="#0e700e" stroke-width="0.9"/>
<ellipse cx="60" cy="291" rx="1.7" ry="3" fill="#e02020" stroke="#901010" stroke-width="0.5"/>
<circle cx="60" cy="297" r="1.6" fill="#e02020" stroke="#901010" stroke-width="0.5"/>
<text x="67.5" y="299" font-size="11" stroke="#000" stroke-width="0.2" textLength="11.4" lengthAdjust="spacingAndGlyphs" >o2</text>
<rect x="37" y="311" width="1" height="1" fill="#a0a0a0" />
<rect x="39" y="311" width="1" height="1" fill="#a0a0a0" />
<rect x="41" y="311" width="1" height="1" fill="#a0a0a0" />
<rect x="43" y="311" width="1" height="1" fill="#a0a0a0" />
<rect x="45" y="311" width="1" height="1" fill="#a0a0a0" />
<path d="M50.5 308.5 h3 v3 h3 v3 h-3 v3 h-3 v-3 h-3 v-3 h3 z" fill="#3cb03c" stroke="#0e700e" stroke-width="0.9"/>
<rect x="57" y="304" width="6" height="1" fill="#909090" />
<rect x="57" y="306" width="6" height="1" fill="#909090" />
<rect x="57" y="308" width="6" height="1" fill="#909090" />
<text x="67.5" y="315" font-size="11" stroke="#000" stroke-width="0.2" textLength="24.1" lengthAdjust="spacingAndGlyphs" >make</text>
<rect x="37" y="327" width="1" height="1" fill="#a0a0a0" />
<rect x="39" y="327" width="1" height="1" fill="#a0a0a0" />
<rect x="41" y="327" width="1" height="1" fill="#a0a0a0" />
<rect x="43" y="327" width="1" height="1" fill="#a0a0a0" />
<rect x="45" y="327" width="1" height="1" fill="#a0a0a0" />
<path d="M50.5 324.5 h3 v3 h3 v3 h-3 v3 h-3 v-3 h-3 v-3 h3 z" fill="#3cb03c" stroke="#0e700e" stroke-width="0.9"/>
<rect x="57" y="320" width="6" height="1" fill="#909090" />
<rect x="57" y="322" width="6" height="1" fill="#909090" />
<rect x="57" y="324" width="6" height="1" fill="#909090" />
<text x="67.5" y="331" font-size="11" stroke="#000" stroke-width="0.2" textLength="143.5" lengthAdjust="spacingAndGlyphs" >display_demonstration_messa</text>
<rect x="36" y="192" width="1" height="1" fill="#a0a0a0" />
<rect x="36" y="194" width="1" height="1" fill="#a0a0a0" />
<rect x="36" y="196" width="1" height="1" fill="#a0a0a0" />
<rect x="36" y="198" width="1" height="1" fill="#a0a0a0" />
<rect x="36" y="200" width="1" height="1" fill="#a0a0a0" />
<rect x="36" y="202" width="1" height="1" fill="#a0a0a0" />
<rect x="36" y="204" width="1" height="1" fill="#a0a0a0" />
<rect x="36" y="206" width="1" height="1" fill="#a0a0a0" />
<rect x="36" y="208" width="1" height="1" fill="#a0a0a0" />
<rect x="36" y="210" width="1" height="1" fill="#a0a0a0" />
<rect x="36" y="212" width="1" height="1" fill="#a0a0a0" />
<rect x="36" y="214" width="1" height="1" fill="#a0a0a0" />
<rect x="36" y="240" width="1" height="1" fill="#a0a0a0" />
<rect x="36" y="242" width="1" height="1" fill="#a0a0a0" />
<rect x="36" y="244" width="1" height="1" fill="#a0a0a0" />
<rect x="36" y="246" width="1" height="1" fill="#a0a0a0" />
<rect x="36" y="272" width="1" height="1" fill="#a0a0a0" />
<rect x="36" y="274" width="1" height="1" fill="#a0a0a0" />
<rect x="36" y="276" width="1" height="1" fill="#a0a0a0" />
<rect x="36" y="278" width="1" height="1" fill="#a0a0a0" />
<rect x="36" y="280" width="1" height="1" fill="#a0a0a0" />
<rect x="36" y="282" width="1" height="1" fill="#a0a0a0" />
<rect x="36" y="284" width="1" height="1" fill="#a0a0a0" />
<rect x="36" y="286" width="1" height="1" fill="#a0a0a0" />
<rect x="36" y="288" width="1" height="1" fill="#a0a0a0" />
<rect x="36" y="290" width="1" height="1" fill="#a0a0a0" />
<rect x="36" y="292" width="1" height="1" fill="#a0a0a0" />
<rect x="36" y="294" width="1" height="1" fill="#a0a0a0" />
<rect x="36" y="296" width="1" height="1" fill="#a0a0a0" />
<rect x="36" y="298" width="1" height="1" fill="#a0a0a0" />
<rect x="36" y="300" width="1" height="1" fill="#a0a0a0" />
<rect x="36" y="302" width="1" height="1" fill="#a0a0a0" />
<rect x="36" y="304" width="1" height="1" fill="#a0a0a0" />
<rect x="36" y="306" width="1" height="1" fill="#a0a0a0" />
<rect x="36" y="308" width="1" height="1" fill="#a0a0a0" />
<rect x="36" y="310" width="1" height="1" fill="#a0a0a0" />
<rect x="36" y="312" width="1" height="1" fill="#a0a0a0" />
<rect x="36" y="314" width="1" height="1" fill="#a0a0a0" />
<rect x="36" y="316" width="1" height="1" fill="#a0a0a0" />
<rect x="36" y="318" width="1" height="1" fill="#a0a0a0" />
<rect x="36" y="320" width="1" height="1" fill="#a0a0a0" />
<rect x="36" y="322" width="1" height="1" fill="#a0a0a0" />
<rect x="36" y="324" width="1" height="1" fill="#a0a0a0" />
<rect x="36" y="326" width="1" height="1" fill="#a0a0a0" />
</g>
<rect x="4" y="530" width="209" height="1" fill="#aca899" />
<rect x="5" y="531" width="207" height="1" fill="#ffffff" />
<rect x="5" y="531" width="1" height="18" fill="#ffffff" />
<rect x="212" y="530" width="1" height="19" fill="#716f64" />
<text x="7" y="544" font-size="12" stroke="#000" stroke-width="0.2" textLength="36.4" lengthAdjust="spacingAndGlyphs" >Clusters</text>
<path d="M54.5 537.5 h4 l1 1 h5 v6 h-10 z" fill="#f0ec60" stroke="#9c9410"/>
<ellipse cx="60" cy="541.5" rx="2.2" ry="1.5" fill="#1f86e0" stroke="#0a4fa0" stroke-width="0.9"/>
<path d="M56 534.7 L56.805 536.195 L58.3 537 L56.805 537.805 L56 539.3 L55.195 537.805 L53.7 537 L55.195 536.195 Z" fill="#ffff40" stroke="#b0a000" stroke-width="0.7"/>
<rect x="73" y="537" width="2" height="8" fill="#e03010" />
<rect x="75" y="537" width="2" height="8" fill="#a020c0" />
<rect x="77" y="537" width="2" height="8" fill="#20b020" />
<rect x="79" y="537" width="2" height="8" fill="#3050e0" />
<path d="M74 534.7 L74.805 536.195 L76.3 537 L74.805 537.805 L74 539.3 L73.195 537.805 L71.7 537 L73.195 536.195 Z" fill="#ffff40" stroke="#b0a000" stroke-width="0.7"/>
<ellipse cx="95" cy="539" rx="3.8" ry="2" fill="#f4f4f4" stroke="#a0a0a0" stroke-width="0.9"/>
<path d="M91 534.7 L91.805 536.195 L93.3 537 L91.805 537.805 L91 539.3 L90.195 537.805 L88.7 537 L90.195 536.195 Z" fill="#ffff40" stroke="#b0a000" stroke-width="0.7"/>
<ellipse cx="110" cy="541" rx="4.2" ry="2.8" fill="#1f86e0" stroke="#0a4fa0" stroke-width="0.9"/>
<path d="M107 534.7 L107.805 536.195 L109.3 537 L107.805 537.805 L107 539.3 L106.195 537.805 L104.7 537 L106.195 536.195 Z" fill="#ffff40" stroke="#b0a000" stroke-width="0.7"/>
<path d="M123 536 l8.5 8.5 M131.5 536 l-8.5 8.5" stroke="#c01818" stroke-width="1.8"/>
<circle cx="150.5" cy="538.5" r="3.2" fill="#d8ecff" stroke="#404850" stroke-width="1.2"/>
<path d="M153 541 l4 4" stroke="#c8a818" stroke-width="2.2"/>
<rect x="165.5" y="540.5" width="8" height="3" rx="0.8" fill="#ffffff" stroke="#2858d0"/>
<rect x="165" y="540" width="9" height="1" fill="#2858d0" />
<defs><linearGradient id="mx181_535" x1="0" y1="0" x2="1" y2="1"><stop offset="0" stop-color="#ffffff"/><stop offset="1" stop-color="#c8d4f8"/></linearGradient></defs>
<rect x="181.5" y="535.5" width="9" height="9" fill="url(#mx181_535)" stroke="#2858d0"/>
<rect x="182" y="536" width="8" height="1" fill="#2858d0" />
<path d="M199.5 536.5 L206.5 543.5 M206.5 536.5 L199.5 543.5" stroke="#2858d0" stroke-width="3.2" stroke-linecap="round"/>
<path d="M199.5 536.5 L206.5 543.5 M206.5 536.5 L199.5 543.5" stroke="#ffffff" stroke-width="1.4" stroke-linecap="round"/>
<rect x="5" y="549" width="208" height="1" fill="#000000" />
<rect x="5" y="798" width="208" height="1" fill="#000000" />
<rect x="5" y="549" width="1" height="250" fill="#000000" />
<rect x="212" y="549" width="1" height="250" fill="#000000" />
<rect x="6" y="550" width="206" height="248" fill="#ffffff" />
<rect x="17" y="563" width="1" height="1" fill="#a0a0a0" />
<rect x="17" y="565" width="1" height="1" fill="#a0a0a0" />
<rect x="17" y="567" width="1" height="1" fill="#a0a0a0" />
<rect x="17" y="569" width="1" height="1" fill="#a0a0a0" />
<rect x="17" y="571" width="1" height="1" fill="#a0a0a0" />
<rect x="17" y="573" width="1" height="1" fill="#a0a0a0" />
<rect x="17" y="575" width="1" height="1" fill="#a0a0a0" />
<rect x="17" y="577" width="1" height="1" fill="#a0a0a0" />
<rect x="17" y="579" width="1" height="1" fill="#a0a0a0" />
<rect x="17" y="581" width="1" height="1" fill="#a0a0a0" />
<rect x="17" y="583" width="1" height="1" fill="#a0a0a0" />
<rect x="17" y="585" width="1" height="1" fill="#a0a0a0" />
<rect x="17" y="587" width="1" height="1" fill="#a0a0a0" />
<rect x="17" y="589" width="1" height="1" fill="#a0a0a0" />
<rect x="17" y="591" width="1" height="1" fill="#a0a0a0" />
<rect x="17" y="593" width="1" height="1" fill="#a0a0a0" />
<rect x="17" y="595" width="1" height="1" fill="#a0a0a0" />
<rect x="17" y="597" width="1" height="1" fill="#a0a0a0" />
<rect x="17" y="599" width="1" height="1" fill="#a0a0a0" />
<rect x="17" y="601" width="1" height="1" fill="#a0a0a0" />
<rect x="17" y="603" width="1" height="1" fill="#a0a0a0" />
<rect x="17" y="605" width="1" height="1" fill="#a0a0a0" />
<rect x="17" y="607" width="1" height="1" fill="#a0a0a0" />
<rect x="17" y="609" width="1" height="1" fill="#a0a0a0" />
<rect x="17" y="611" width="1" height="1" fill="#a0a0a0" />
<rect x="17" y="613" width="1" height="1" fill="#a0a0a0" />
<rect x="17" y="615" width="1" height="1" fill="#a0a0a0" />
<rect x="17" y="617" width="1" height="1" fill="#a0a0a0" />
<rect x="17" y="619" width="1" height="1" fill="#a0a0a0" />
<rect x="17" y="621" width="1" height="1" fill="#a0a0a0" />
<rect x="17" y="623" width="1" height="1" fill="#a0a0a0" />
<rect x="17" y="625" width="1" height="1" fill="#a0a0a0" />
<rect x="17" y="627" width="1" height="1" fill="#a0a0a0" />
<rect x="17" y="629" width="1" height="1" fill="#a0a0a0" />
<rect x="17" y="631" width="1" height="1" fill="#a0a0a0" />
<rect x="17" y="633" width="1" height="1" fill="#a0a0a0" />
<rect x="17" y="635" width="1" height="1" fill="#a0a0a0" />
<rect x="17" y="637" width="1" height="1" fill="#a0a0a0" />
<rect x="17" y="639" width="1" height="1" fill="#a0a0a0" />
<rect x="17" y="641" width="1" height="1" fill="#a0a0a0" />
<rect x="17" y="643" width="1" height="1" fill="#a0a0a0" />
<rect x="17" y="645" width="1" height="1" fill="#a0a0a0" />
<rect x="17" y="647" width="1" height="1" fill="#a0a0a0" />
<rect x="17" y="649" width="1" height="1" fill="#a0a0a0" />
<rect x="17" y="651" width="1" height="1" fill="#a0a0a0" />
<rect x="17" y="653" width="1" height="1" fill="#a0a0a0" />
<rect x="17" y="655" width="1" height="1" fill="#a0a0a0" />
<rect x="17" y="657" width="1" height="1" fill="#a0a0a0" />
<rect x="17" y="659" width="1" height="1" fill="#a0a0a0" />
<rect x="17" y="661" width="1" height="1" fill="#a0a0a0" />
<rect x="17" y="663" width="1" height="1" fill="#a0a0a0" />
<rect x="17" y="665" width="1" height="1" fill="#a0a0a0" />
<rect x="17" y="667" width="1" height="1" fill="#a0a0a0" />
<rect x="17" y="669" width="1" height="1" fill="#a0a0a0" />
<rect x="17" y="671" width="1" height="1" fill="#a0a0a0" />
<rect x="17" y="673" width="1" height="1" fill="#a0a0a0" />
<rect x="17" y="675" width="1" height="1" fill="#a0a0a0" />
<rect x="17" y="677" width="1" height="1" fill="#a0a0a0" />
<rect x="17" y="679" width="1" height="1" fill="#a0a0a0" />
<rect x="17" y="681" width="1" height="1" fill="#a0a0a0" />
<rect x="17" y="683" width="1" height="1" fill="#a0a0a0" />
<rect x="17" y="685" width="1" height="1" fill="#a0a0a0" />
<defs><linearGradient id="ex13_554" x1="0" y1="0" x2="1" y2="1"><stop offset="0" stop-color="#ffffff"/><stop offset="1" stop-color="#c8c4b0"/></linearGradient></defs>
<rect x="13.5" y="554.5" width="8" height="8" fill="url(#ex13_554)" stroke="#7a98c0"/>
<rect x="15" y="558" width="5" height="1" fill="#000" />
<rect x="23" y="558" width="1" height="1" fill="#a0a0a0" />
<rect x="25" y="558" width="1" height="1" fill="#a0a0a0" />
<rect x="27" y="558" width="1" height="1" fill="#a0a0a0" />
<path d="M28.5 564.5 V552.5 L29.5 551.5 H36.5 L38.5 553.5 H43.5 V564.5 Z" fill="#eeec10" stroke="#a29a08"/>
<rect x="29" y="552" width="8" height="2" fill="#f4f0a0" />
<rect x="29" y="552" width="2" height="4" fill="#fcfce0" />
<ellipse cx="38.5" cy="560.5" rx="3" ry="2.2" fill="#1a7ae0" stroke="#0a4aa8" stroke-width="0.7"/>
<text x="48.3" y="562" font-size="11" stroke="#000" stroke-width="0.2" textLength="38.7" lengthAdjust="spacingAndGlyphs" >Clusters</text>
<rect x="36" y="566" width="1" height="1" fill="#a0a0a0" />
<rect x="36" y="568" width="1" height="1" fill="#a0a0a0" />
<rect x="36" y="570" width="1" height="1" fill="#a0a0a0" />
<defs><linearGradient id="ex32_570" x1="0" y1="0" x2="1" y2="1"><stop offset="0" stop-color="#ffffff"/><stop offset="1" stop-color="#c8c4b0"/></linearGradient></defs>
<rect x="32.5" y="570.5" width="8" height="8" fill="url(#ex32_570)" stroke="#7a98c0"/>
<rect x="34" y="574" width="5" height="1" fill="#000" />
<rect x="42" y="574" width="1" height="1" fill="#a0a0a0" />
<rect x="44" y="574" width="1" height="1" fill="#a0a0a0" />
<rect x="46" y="574" width="1" height="1" fill="#a0a0a0" />
<path d="M47.5 580.5 V568.5 L48.5 567.5 H55.5 L57.5 569.5 H62.5 V580.5 Z" fill="#eeec10" stroke="#a29a08"/>
<rect x="48" y="568" width="8" height="2" fill="#f4f0a0" />
<rect x="48" y="568" width="2" height="4" fill="#fcfce0" />
<ellipse cx="57.5" cy="576.5" rx="3" ry="2.2" fill="#1a7ae0" stroke="#0a4aa8" stroke-width="0.7"/>
<rect x="66" y="566" width="65" height="16" fill="#ece9d8" />
<text x="67.5" y="578" font-size="11" stroke="#000" stroke-width="0.2" textLength="57.5" lengthAdjust="spacingAndGlyphs" >root_cluster</text>
<rect x="55" y="582" width="1" height="1" fill="#a0a0a0" />
<rect x="55" y="584" width="1" height="1" fill="#a0a0a0" />
<rect x="55" y="586" width="1" height="1" fill="#a0a0a0" />
<rect x="55" y="588" width="1" height="1" fill="#a0a0a0" />
<rect x="55" y="590" width="1" height="1" fill="#a0a0a0" />
<rect x="55" y="592" width="1" height="1" fill="#a0a0a0" />
<rect x="55" y="594" width="1" height="1" fill="#a0a0a0" />
<rect x="55" y="596" width="1" height="1" fill="#a0a0a0" />
<rect x="55" y="598" width="1" height="1" fill="#a0a0a0" />
<rect x="55" y="600" width="1" height="1" fill="#a0a0a0" />
<rect x="55" y="602" width="1" height="1" fill="#a0a0a0" />
<rect x="55" y="604" width="1" height="1" fill="#a0a0a0" />
<rect x="55" y="606" width="1" height="1" fill="#a0a0a0" />
<rect x="55" y="608" width="1" height="1" fill="#a0a0a0" />
<rect x="55" y="610" width="1" height="1" fill="#a0a0a0" />
<rect x="55" y="612" width="1" height="1" fill="#a0a0a0" />
<rect x="55" y="614" width="1" height="1" fill="#a0a0a0" />
<rect x="55" y="616" width="1" height="1" fill="#a0a0a0" />
<rect x="55" y="618" width="1" height="1" fill="#a0a0a0" />
<rect x="55" y="620" width="1" height="1" fill="#a0a0a0" />
<rect x="55" y="622" width="1" height="1" fill="#a0a0a0" />
<rect x="55" y="624" width="1" height="1" fill="#a0a0a0" />
<rect x="55" y="626" width="1" height="1" fill="#a0a0a0" />
<rect x="55" y="628" width="1" height="1" fill="#a0a0a0" />
<rect x="55" y="630" width="1" height="1" fill="#a0a0a0" />
<rect x="55" y="632" width="1" height="1" fill="#a0a0a0" />
<rect x="55" y="634" width="1" height="1" fill="#a0a0a0" />
<rect x="55" y="636" width="1" height="1" fill="#a0a0a0" />
<rect x="55" y="638" width="1" height="1" fill="#a0a0a0" />
<rect x="55" y="640" width="1" height="1" fill="#a0a0a0" />
<rect x="55" y="642" width="1" height="1" fill="#a0a0a0" />
<rect x="55" y="644" width="1" height="1" fill="#a0a0a0" />
<rect x="55" y="646" width="1" height="1" fill="#a0a0a0" />
<rect x="55" y="648" width="1" height="1" fill="#a0a0a0" />
<rect x="55" y="650" width="1" height="1" fill="#a0a0a0" />
<rect x="55" y="652" width="1" height="1" fill="#a0a0a0" />
<rect x="55" y="654" width="1" height="1" fill="#a0a0a0" />
<defs><linearGradient id="ex51_586" x1="0" y1="0" x2="1" y2="1"><stop offset="0" stop-color="#ffffff"/><stop offset="1" stop-color="#c8c4b0"/></linearGradient></defs>
<rect x="51.5" y="586.5" width="8" height="8" fill="url(#ex51_586)" stroke="#7a98c0"/>
<rect x="53" y="590" width="5" height="1" fill="#000" />
<rect x="55" y="588" width="1" height="5" fill="#000" />
<rect x="61" y="590" width="1" height="1" fill="#a0a0a0" />
<rect x="63" y="590" width="1" height="1" fill="#a0a0a0" />
<rect x="65" y="590" width="1" height="1" fill="#a0a0a0" />
<path d="M66.5 596.5 V584.5 L67.5 583.5 H74.5 L76.5 585.5 H81.5 V596.5 Z" fill="#eeec10" stroke="#a29a08"/>
<rect x="67" y="584" width="8" height="2" fill="#f4f0a0" />
<rect x="67" y="584" width="2" height="4" fill="#fcfce0" />
<ellipse cx="76.5" cy="592.5" rx="3" ry="2.2" fill="#1a7ae0" stroke="#0a4aa8" stroke-width="0.7"/>
<text x="86.5" y="594" font-size="11" stroke="#000" stroke-width="0.2" textLength="50.5" lengthAdjust="spacingAndGlyphs" >my_cluster</text>
<rect x="57" y="606" width="1" height="1" fill="#a0a0a0" />
<rect x="59" y="606" width="1" height="1" fill="#a0a0a0" />
<rect x="61" y="606" width="1" height="1" fill="#a0a0a0" />
<rect x="63" y="606" width="1" height="1" fill="#a0a0a0" />
<rect x="65" y="606" width="1" height="1" fill="#a0a0a0" />
<ellipse cx="73.5" cy="606" rx="6" ry="4.2" fill="#1f86e0" stroke="#0a4fa0" stroke-width="0.9"/>
<text x="86.5" y="610" font-size="11" stroke="#000" stroke-width="0.2" textLength="22.7" lengthAdjust="spacingAndGlyphs" >HEIR</text>
<rect x="57" y="622" width="1" height="1" fill="#a0a0a0" />
<rect x="59" y="622" width="1" height="1" fill="#a0a0a0" />
<rect x="61" y="622" width="1" height="1" fill="#a0a0a0" />
<rect x="63" y="622" width="1" height="1" fill="#a0a0a0" />
<rect x="65" y="622" width="1" height="1" fill="#a0a0a0" />
<ellipse cx="73.5" cy="622" rx="6" ry="4.2" fill="#c8c8c8" stroke="#909090" stroke-width="0.9"/>
<text x="86.5" y="626" font-size="11" stroke="#000" stroke-width="0.2" textLength="39.1" lengthAdjust="spacingAndGlyphs" >INVALID</text>
<rect x="57" y="638" width="1" height="1" fill="#a0a0a0" />
<rect x="59" y="638" width="1" height="1" fill="#a0a0a0" />
<rect x="61" y="638" width="1" height="1" fill="#a0a0a0" />
<rect x="63" y="638" width="1" height="1" fill="#a0a0a0" />
<rect x="65" y="638" width="1" height="1" fill="#a0a0a0" />
<ellipse cx="73.5" cy="638" rx="6" ry="4.2" fill="#1f86e0" stroke="#0a4fa0" stroke-width="0.9"/>
<text x="86.5" y="642" font-size="11" stroke="#000" stroke-width="0.2" textLength="37.8" lengthAdjust="spacingAndGlyphs" >PARENT</text>
<rect x="57" y="654" width="1" height="1" fill="#a0a0a0" />
<rect x="59" y="654" width="1" height="1" fill="#a0a0a0" />
<rect x="61" y="654" width="1" height="1" fill="#a0a0a0" />
<rect x="63" y="654" width="1" height="1" fill="#a0a0a0" />
<rect x="65" y="654" width="1" height="1" fill="#a0a0a0" />
<ellipse cx="73.5" cy="654" rx="6" ry="4.2" fill="#1f86e0" stroke="#0a4fa0" stroke-width="0.9"/>
<text x="86.5" y="658" font-size="11" stroke="#000" stroke-width="0.2" textLength="57.8" lengthAdjust="spacingAndGlyphs" >TESTROOT</text>
<defs><linearGradient id="ex13_666" x1="0" y1="0" x2="1" y2="1"><stop offset="0" stop-color="#ffffff"/><stop offset="1" stop-color="#c8c4b0"/></linearGradient></defs>
<rect x="13.5" y="666.5" width="8" height="8" fill="url(#ex13_666)" stroke="#7a98c0"/>
<rect x="15" y="670" width="5" height="1" fill="#000" />
<rect x="17" y="668" width="1" height="5" fill="#000" />
<rect x="23" y="670" width="1" height="1" fill="#a0a0a0" />
<rect x="25" y="670" width="1" height="1" fill="#a0a0a0" />
<rect x="27" y="670" width="1" height="1" fill="#a0a0a0" />
<path d="M28.5 676.5 V663.5 H35.5 L37.5 665.5 H43.5 V676.5 Z" fill="#f0ec30" stroke="#a29a08"/>
<rect x="30" y="667" width="3" height="8" fill="#e83010" />
<rect x="33" y="667" width="3" height="8" fill="#b020c0" />
<rect x="36" y="667" width="3" height="8" fill="#20a820" />
<rect x="39" y="667" width="3" height="8" fill="#3070f0" />
<text x="48.3" y="674" font-size="11" stroke="#000" stroke-width="0.2" textLength="39.6" lengthAdjust="spacingAndGlyphs" >Libraries</text>
<defs><linearGradient id="ex13_682" x1="0" y1="0" x2="1" y2="1"><stop offset="0" stop-color="#ffffff"/><stop offset="1" stop-color="#c8c4b0"/></linearGradient></defs>
<rect x="13.5" y="682.5" width="8" height="8" fill="url(#ex13_682)" stroke="#7a98c0"/>
<rect x="15" y="686" width="5" height="1" fill="#000" />
<rect x="17" y="684" width="1" height="5" fill="#000" />
<rect x="23" y="686" width="1" height="1" fill="#a0a0a0" />
<rect x="25" y="686" width="1" height="1" fill="#a0a0a0" />
<rect x="27" y="686" width="1" height="1" fill="#a0a0a0" />
<circle cx="36" cy="686" r="7" fill="#ffffff" stroke="#6a90e0" stroke-width="1.6"/>
<circle cx="36" cy="686" r="2.9" fill="#ff0000"/>
<text x="48.3" y="690" font-size="11" stroke="#000" stroke-width="0.2" textLength="38.7" lengthAdjust="spacingAndGlyphs" >common</text>
<rect x="218" y="155" width="744" height="1" fill="#aca899" />
<rect x="219" y="156" width="742" height="1" fill="#ffffff" />
<rect x="219" y="156" width="1" height="17" fill="#ffffff" />
<rect x="961" y="155" width="1" height="18" fill="#716f64" />
<text x="220.5" y="169" font-size="12" stroke="#000" stroke-width="0.2" textLength="27" lengthAdjust="spacingAndGlyphs" >Editor</text>
<rect x="914.5" y="165.5" width="8" height="3" rx="0.8" fill="#ffffff" stroke="#2858d0"/>
<rect x="914" y="165" width="9" height="1" fill="#2858d0" />
<defs><linearGradient id="mx930_160" x1="0" y1="0" x2="1" y2="1"><stop offset="0" stop-color="#ffffff"/><stop offset="1" stop-color="#c8d4f8"/></linearGradient></defs>
<rect x="930.5" y="160.5" width="9" height="9" fill="url(#mx930_160)" stroke="#2858d0"/>
<rect x="931" y="161" width="8" height="1" fill="#2858d0" />
<path d="M948.5 161.5 L955.5 168.5 M955.5 161.5 L948.5 168.5" stroke="#2858d0" stroke-width="3.2" stroke-linecap="round"/>
<path d="M948.5 161.5 L955.5 168.5 M955.5 161.5 L948.5 168.5" stroke="#ffffff" stroke-width="1.4" stroke-linecap="round"/>
<rect x="218" y="173" width="744" height="1" fill="#716f64" />
<rect x="218" y="173" width="1" height="381" fill="#aca899" />
<rect x="219" y="174" width="726" height="380" fill="#ffffff" />
<defs><linearGradient id="vs945_174" x1="0" y1="0" x2="1" y2="0"><stop offset="0" stop-color="#f3f1ec"/><stop offset="1" stop-color="#fefefb"/></linearGradient><linearGradient id="vb945_174" x1="0" y1="0" x2="1" y2="1"><stop offset="0" stop-color="#d6e2fc"/><stop offset="1" stop-color="#b0c8f8"/></linearGradient></defs>
<rect x="945" y="174" width="16" height="380" fill="url(#vs945_174)" />
<rect x="946.5" y="174.5" width="14" height="15" rx="2" fill="url(#vb945_174)" stroke="#ffffff"/>
<rect x="947" y="190" width="13" height="1" fill="#a8bcec" />
<path d="M950 184 l3.5 -3.5 l3.5 3.5" stroke="#4d6185" stroke-width="2" fill="none"/>
<rect x="946.5" y="537.5" width="14" height="15" rx="2" fill="url(#vb945_174)" stroke="#ffffff"/>
<rect x="947" y="553" width="13" height="1" fill="#a8bcec" />
<path d="M950 543 l3.5 3.5 l3.5 -3.5" stroke="#4d6185" stroke-width="2" fill="none"/>
<rect x="946.5" y="191.5" width="14" height="99" rx="2" fill="url(#vb945_174)" stroke="#ffffff"/>
<rect x="947" y="291" width="13" height="1" fill="#a8bcec" />
<rect x="950" y="238" width="7" height="1" fill="#eef3ff" />
<rect x="950" y="239" width="7" height="1" fill="#8cb0f8" />
<rect x="950" y="240" width="7" height="1" fill="#eef3ff" />
<rect x="950" y="241" width="7" height="1" fill="#8cb0f8" />
<rect x="950" y="242" width="7" height="1" fill="#eef3ff" />
<rect x="950" y="243" width="7" height="1" fill="#8cb0f8" />
<rect x="950" y="244" width="7" height="1" fill="#eef3ff" />
<rect x="950" y="245" width="7" height="1" fill="#8cb0f8" />
<text x="227.0" y="186" font-family="Liberation Mono" font-size="10.5" letter-spacing="0.700" fill="#000080" stroke="#000080" stroke-width="0.1" font-weight="bold">indexing</text>
<text x="255.0" y="201" font-family="Liberation Mono" font-size="10.5" letter-spacing="0.700" fill="#000000" stroke="#000000" stroke-width="0.25">legal:</text>
<text x="304.0" y="201" font-family="Liberation Mono" font-size="10.5" letter-spacing="0.700" fill="#008080" stroke="#008080" stroke-width="0.25">"See</text>
<text x="339.0" y="201" font-family="Liberation Mono" font-size="10.5" letter-spacing="0.700" fill="#008080" stroke="#008080" stroke-width="0.25">notice</text>
<text x="388.0" y="201" font-family="Liberation Mono" font-size="10.5" letter-spacing="0.700" fill="#008080" stroke="#008080" stroke-width="0.25">at</text>
<text x="409.0" y="201" font-family="Liberation Mono" font-size="10.5" letter-spacing="0.700" fill="#008080" stroke="#008080" stroke-width="0.25">end</text>
<text x="437.0" y="201" font-family="Liberation Mono" font-size="10.5" letter-spacing="0.700" fill="#008080" stroke="#008080" stroke-width="0.25">of</text>
<text x="458.0" y="201" font-family="Liberation Mono" font-size="10.5" letter-spacing="0.700" fill="#008080" stroke="#008080" stroke-width="0.25">class."</text>
<text x="255.0" y="216" font-family="Liberation Mono" font-size="10.5" letter-spacing="0.700" fill="#000000" stroke="#000000" stroke-width="0.25">status:</text>
<text x="311.0" y="216" font-family="Liberation Mono" font-size="10.5" letter-spacing="0.700" fill="#008080" stroke="#008080" stroke-width="0.25">"See</text>
<text x="346.0" y="216" font-family="Liberation Mono" font-size="10.5" letter-spacing="0.700" fill="#008080" stroke="#008080" stroke-width="0.25">notice</text>
<text x="395.0" y="216" font-family="Liberation Mono" font-size="10.5" letter-spacing="0.700" fill="#008080" stroke="#008080" stroke-width="0.25">at</text>
<text x="416.0" y="216" font-family="Liberation Mono" font-size="10.5" letter-spacing="0.700" fill="#008080" stroke="#008080" stroke-width="0.25">end</text>
<text x="444.0" y="216" font-family="Liberation Mono" font-size="10.5" letter-spacing="0.700" fill="#008080" stroke="#008080" stroke-width="0.25">of</text>
<text x="465.0" y="216" font-family="Liberation Mono" font-size="10.5" letter-spacing="0.700" fill="#008080" stroke="#008080" stroke-width="0.25">class."</text>
<text x="227.0" y="231" font-family="Liberation Mono" font-size="10.5" letter-spacing="0.700" fill="#000080" stroke="#000080" stroke-width="0.1" font-weight="bold">class</text>
<text x="269.0" y="231" font-family="Liberation Mono" font-size="10.5" letter-spacing="0.700" fill="#0000ff" stroke="#0000ff" stroke-width="0.25">TESTROOT</text>
<text x="332.0" y="231" font-family="Liberation Mono" font-size="10.5" letter-spacing="0.700" fill="#000080" stroke="#000080" stroke-width="0.1" font-weight="bold">create</text>
<text x="255.0" y="261" font-family="Liberation Mono" font-size="10.5" letter-spacing="0.700" fill="#000000" stroke="#000000" stroke-width="0.25">make</text>
<text x="227.0" y="291" font-family="Liberation Mono" font-size="10.5" letter-spacing="0.700" fill="#000080" stroke="#000080" stroke-width="0.1" font-weight="bold">feature</text>
<text x="283.0" y="291" font-family="Liberation Mono" font-size="10.5" letter-spacing="0.700" fill="#800000" stroke="#800000" stroke-width="0.25">--</text>
<text x="304.0" y="291" font-family="Liberation Mono" font-size="10.5" letter-spacing="0.700" fill="#800000" stroke="#800000" stroke-width="0.25">Access</text>
<text x="255.0" y="321" font-family="Liberation Mono" font-size="10.5" letter-spacing="0.700" fill="#000000" stroke="#000000" stroke-width="0.25">other:</text>
<text x="304.0" y="321" font-family="Liberation Mono" font-size="10.5" letter-spacing="0.700" fill="#0000ff" stroke="#0000ff" stroke-width="0.25">HEIR</text>
<text x="255.0" y="351" font-family="Liberation Mono" font-size="10.5" letter-spacing="0.700" fill="#000000" stroke="#000000" stroke-width="0.25">my_heir:</text>
<text x="318.0" y="351" font-family="Liberation Mono" font-size="10.5" letter-spacing="0.700" fill="#0000ff" stroke="#0000ff" stroke-width="0.25">HEIR2</text>
<text x="227.0" y="381" font-family="Liberation Mono" font-size="10.5" letter-spacing="0.700" fill="#000080" stroke="#000080" stroke-width="0.1" font-weight="bold">feature</text>
<text x="283.0" y="381" font-family="Liberation Mono" font-size="10.5" letter-spacing="0.700" fill="#800000" stroke="#800000" stroke-width="0.25">--</text>
<text x="304.0" y="381" font-family="Liberation Mono" font-size="10.5" letter-spacing="0.700" fill="#800000" stroke="#800000" stroke-width="0.25">Element</text>
<text x="360.0" y="381" font-family="Liberation Mono" font-size="10.5" letter-spacing="0.700" fill="#800000" stroke="#800000" stroke-width="0.25">change</text>
<text x="255.0" y="411" font-family="Liberation Mono" font-size="10.5" letter-spacing="0.700" fill="#000000" stroke="#000000" stroke-width="0.25">set_my_heir</text>
<text x="339.0" y="411" font-family="Liberation Mono" font-size="10.5" letter-spacing="0.700" fill="#000000" stroke="#000000" stroke-width="0.25">(a_my_heir:</text>
<text x="423.0" y="411" font-family="Liberation Mono" font-size="10.5" letter-spacing="0.700" fill="#000080" stroke="#000080" stroke-width="0.1" font-weight="bold">like</text>
<text x="458.0" y="411" font-family="Liberation Mono" font-size="10.5" letter-spacing="0.700" fill="#000000" stroke="#000000" stroke-width="0.25">my_heir)</text>
<text x="521.0" y="411" font-family="Liberation Mono" font-size="10.5" letter-spacing="0.700" fill="#000080" stroke="#000080" stroke-width="0.1" font-weight="bold">is</text>
<text x="311.0" y="426" font-family="Liberation Mono" font-size="10.5" letter-spacing="0.700" fill="#800000" stroke="#800000" stroke-width="0.25">--</text>
<text x="332.0" y="426" font-family="Liberation Mono" font-size="10.5" letter-spacing="0.700" fill="#800000" stroke="#800000" stroke-width="0.25">Set</text>
<text x="360.0" y="426" font-family="Liberation Mono" font-size="10.5" letter-spacing="0.700" fill="#000000" stroke="#000000" stroke-width="0.25">`my_heir'</text>
<text x="430.0" y="426" font-family="Liberation Mono" font-size="10.5" letter-spacing="0.700" fill="#800000" stroke="#800000" stroke-width="0.25">to</text>
<text x="451.0" y="426" font-family="Liberation Mono" font-size="10.5" letter-spacing="0.700" fill="#000000" stroke="#000000" stroke-width="0.25">`a_my_heir'</text>
<text x="528.0" y="426" font-family="Liberation Mono" font-size="10.5" letter-spacing="0.700" fill="#800000" stroke="#800000" stroke-width="0.25">.</text>
<text x="283.0" y="441" font-family="Liberation Mono" font-size="10.5" letter-spacing="0.700" fill="#000080" stroke="#000080" stroke-width="0.1" font-weight="bold">require</text>
<text x="311.0" y="456" font-family="Liberation Mono" font-size="10.5" letter-spacing="0.700" fill="#000000" stroke="#000000" stroke-width="0.25">a_my_heir_not_void:</text>
<text x="451.0" y="456" font-family="Liberation Mono" font-size="10.5" letter-spacing="0.700" fill="#000000" stroke="#000000" stroke-width="0.25">a_my_heir</text>
<text x="521.0" y="456" font-family="Liberation Mono" font-size="10.5" letter-spacing="0.700" fill="#ff0000" stroke="#ff0000" stroke-width="0.25">/=</text>
<text x="542.0" y="456" font-family="Liberation Mono" font-size="10.5" letter-spacing="0.700" fill="#000080" stroke="#000080" stroke-width="0.1" font-weight="bold">Void</text>
<text x="283.0" y="471" font-family="Liberation Mono" font-size="10.5" letter-spacing="0.700" fill="#000080" stroke="#000080" stroke-width="0.1" font-weight="bold">local</text>
<text x="311.0" y="486" font-family="Liberation Mono" font-size="10.5" letter-spacing="0.700" fill="#000000" stroke="#000000" stroke-width="0.25">l_1:</text>
<text x="283.0" y="501" font-family="Liberation Mono" font-size="10.5" letter-spacing="0.700" fill="#000080" stroke="#000080" stroke-width="0.1" font-weight="bold">do</text>
<text x="311.0" y="516" font-family="Liberation Mono" font-size="10.5" letter-spacing="0.700" fill="#000000" stroke="#000000" stroke-width="0.25">l_1.</text>
<text x="311.0" y="531" font-family="Liberation Mono" font-size="10.5" letter-spacing="0.700" fill="#000000" stroke="#000000" stroke-width="0.25">my_heir</text>
<text x="367.0" y="531" font-family="Liberation Mono" font-size="10.5" letter-spacing="0.700" fill="#ff0000" stroke="#ff0000" stroke-width="0.25">:=</text>
<text x="388.0" y="531" font-family="Liberation Mono" font-size="10.5" letter-spacing="0.700" fill="#000000" stroke="#000000" stroke-width="0.25">a_my_heir</text>
<text x="283.0" y="546" font-family="Liberation Mono" font-size="10.5" letter-spacing="0.700" fill="#000080" stroke="#000080" stroke-width="0.1" font-weight="bold">ensure</text>
<rect x="227" y="294" width="2" height="15" fill="#c0c0c0" />
<rect x="218" y="559" width="744" height="1" fill="#aca899" />
<rect x="219" y="560" width="742" height="1" fill="#ffffff" />
<rect x="219" y="560" width="1" height="17" fill="#ffffff" />
<rect x="218" y="559" width="1" height="217" fill="#aca899" />
<rect x="961" y="559" width="1" height="18" fill="#716f64" />
<text x="220.5" y="573" font-size="12" stroke="#000" stroke-width="0.2" textLength="35" lengthAdjust="spacingAndGlyphs" >Context</text>
<path d="M267.5 569 l9.5 -5.5 v11 z" fill="#40c040" stroke="#108010" stroke-width="0.8"/>
<path d="M285 575 l10 -5.5" stroke="#fff" stroke-width="1"/>
<path d="M294 569 l-10 -5.5 v11 z" fill="#aca899"/>
<text x="304.6" y="572" font-size="12" fill="#800000" stroke="#800000" stroke-width="0.2" textLength="54.4" lengthAdjust="spacingAndGlyphs" >root_cluster</text>
<text x="371.3" y="572" font-size="12" fill="#0000ff" stroke="#0000ff" stroke-width="0.2" textLength="57.7" lengthAdjust="spacingAndGlyphs" >TESTROOT</text>
<text x="438.5" y="572" font-size="12" fill="#008000" stroke="#008000" stroke-width="0.2" textLength="25.5" lengthAdjust="spacingAndGlyphs" >make</text>
<rect x="914.5" y="569.5" width="8" height="3" rx="0.8" fill="#ffffff" stroke="#2858d0"/>
<rect x="914" y="569" width="9" height="1" fill="#2858d0" />
<defs><linearGradient id="mx930_564" x1="0" y1="0" x2="1" y2="1"><stop offset="0" stop-color="#ffffff"/><stop offset="1" stop-color="#c8d4f8"/></linearGradient></defs>
<rect x="930.5" y="564.5" width="9" height="9" fill="url(#mx930_564)" stroke="#2858d0"/>
<rect x="931" y="565" width="8" height="1" fill="#2858d0" />
<path d="M948.5 565.5 L955.5 572.5 M955.5 565.5 L948.5 572.5" stroke="#2858d0" stroke-width="3.2" stroke-linecap="round"/>
<path d="M948.5 565.5 L955.5 572.5 M955.5 565.5 L948.5 572.5" stroke="#ffffff" stroke-width="1.4" stroke-linecap="round"/>
<rect x="218" y="577" width="744" height="1" fill="#716f64" />
<rect x="219" y="578" width="1" height="198" fill="#9aa7b4" />
<rect x="219" y="578" width="741" height="1" fill="#9aa7b4" />
<rect x="220" y="579" width="740" height="197" fill="#ffffff" />
<rect x="223" y="582" width="736" height="1" fill="#aca899" />
<rect x="223" y="775" width="736" height="1" fill="#aca899" />
<rect x="223" y="582" width="1" height="194" fill="#aca899" />
<rect x="958" y="582" width="1" height="194" fill="#aca899" />
<rect x="224" y="775" width="735" height="1" fill="#ffffff" />
<rect x="958" y="583" width="1" height="193" fill="#ffffff" />
<rect x="959" y="578" width="1" height="198" fill="#9aa7b4" />
<rect x="224" y="583" width="734" height="192" fill="#ffffff" />
<defs><linearGradient id="vs941_583" x1="0" y1="0" x2="1" y2="0"><stop offset="0" stop-color="#f3f1ec"/><stop offset="1" stop-color="#fefefb"/></linearGradient><linearGradient id="vb941_583" x1="0" y1="0" x2="1" y2="1"><stop offset="0" stop-color="#d6e2fc"/><stop offset="1" stop-color="#b0c8f8"/></linearGradient></defs>
<rect x="941" y="583" width="16" height="192" fill="url(#vs941_583)" />
<rect x="942.5" y="583.5" width="14" height="15" rx="2" fill="url(#vb941_583)" stroke="#ffffff"/>
<rect x="943" y="599" width="13" height="1" fill="#a8bcec" />
<path d="M946 593 l3.5 -3.5 l3.5 3.5" stroke="#4d6185" stroke-width="2" fill="none"/>
<rect x="942.5" y="758.5" width="14" height="15" rx="2" fill="url(#vb941_583)" stroke="#ffffff"/>
<rect x="943" y="774" width="13" height="1" fill="#a8bcec" />
<path d="M946 764 l3.5 3.5 l3.5 -3.5" stroke="#4d6185" stroke-width="2" fill="none"/>
<rect x="942.5" y="599.5" width="14" height="117" rx="2" fill="url(#vb941_583)" stroke="#ffffff"/>
<rect x="943" y="717" width="13" height="1" fill="#a8bcec" />
<rect x="946" y="655" width="7" height="1" fill="#eef3ff" />
<rect x="946" y="656" width="7" height="1" fill="#8cb0f8" />
<rect x="946" y="657" width="7" height="1" fill="#eef3ff" />
<rect x="946" y="658" width="7" height="1" fill="#8cb0f8" />
<rect x="946" y="659" width="7" height="1" fill="#eef3ff" />
<rect x="946" y="660" width="7" height="1" fill="#8cb0f8" />
<rect x="946" y="661" width="7" height="1" fill="#eef3ff" />
<rect x="946" y="662" width="7" height="1" fill="#8cb0f8" />
<rect x="232" y="583" width="2" height="15" fill="#c0c0c0" />
<text x="233.0" y="595" font-family="Liberation Mono" font-size="10.5" letter-spacing="0.700" fill="#000080" stroke="#000080" stroke-width="0.1" font-weight="bold">System</text>
<text x="261.0" y="610" font-family="Liberation Mono" font-size="10.5" letter-spacing="0.700" fill="#000000" stroke="#000000" stroke-width="0.25">name:</text>
<text x="352.0" y="610" font-family="Liberation Mono" font-size="10.5" letter-spacing="0.700" fill="#000000" stroke="#000000" stroke-width="0.25">simple</text>
<text x="261.0" y="625" font-family="Liberation Mono" font-size="10.5" letter-spacing="0.700" fill="#000000" stroke="#000000" stroke-width="0.25">target:</text>
<text x="352.0" y="625" font-family="Liberation Mono" font-size="10.5" letter-spacing="0.700" fill="#000000" stroke="#000000" stroke-width="0.25">classic</text>
<text x="261.0" y="640" font-family="Liberation Mono" font-size="10.5" letter-spacing="0.700" fill="#000000" stroke="#000000" stroke-width="0.25">config</text>
<text x="310.0" y="640" font-family="Liberation Mono" font-size="10.5" letter-spacing="0.700" fill="#000000" stroke="#000000" stroke-width="0.25">file:</text>
<text x="352.0" y="640" font-family="Liberation Mono" font-size="10.5" letter-spacing="0.700" fill="#000000" stroke="#000000" stroke-width="0.25">J:\Eiffel57\examples\studio\tour\simple.ecf</text>
<text x="261.0" y="655" font-family="Liberation Mono" font-size="10.5" letter-spacing="0.700" fill="#000000" stroke="#000000" stroke-width="0.25">location:</text>
<text x="352.0" y="655" font-family="Liberation Mono" font-size="10.5" letter-spacing="0.700" fill="#000000" stroke="#000000" stroke-width="0.25">J:\Eiffel57\examples\studio\tour</text>
<text x="261.0" y="670" font-family="Liberation Mono" font-size="10.5" letter-spacing="0.700" fill="#000000" stroke="#000000" stroke-width="0.25">compilation:</text>
<text x="352.0" y="670" font-family="Liberation Mono" font-size="10.5" letter-spacing="0.700" fill="#000000" stroke="#000000" stroke-width="0.25">J:\Eiffel57\examples\studio\tour\EIFGENs\classic</text>
<text x="233.0" y="700" font-family="Liberation Mono" font-size="10.5" letter-spacing="0.700" fill="#000080" stroke="#000080" stroke-width="0.1" font-weight="bold">Root</text>
<text x="268.0" y="700" font-family="Liberation Mono" font-size="10.5" letter-spacing="0.700" fill="#000080" stroke="#000080" stroke-width="0.1" font-weight="bold">class</text>
<text x="261.0" y="715" font-family="Liberation Mono" font-size="10.5" letter-spacing="0.700" fill="#0000ff" stroke="#0000ff" stroke-width="0.25">TESTROOT</text>
<text x="324.0" y="715" font-family="Liberation Mono" font-size="10.5" letter-spacing="0.700" fill="#ff0000" stroke="#ff0000" stroke-width="0.25">(</text>
<text x="331.0" y="715" font-family="Liberation Mono" font-size="10.5" letter-spacing="0.700" fill="#800000" stroke="#800000" stroke-width="0.25">root_cluster</text>
<text x="415.0" y="715" font-family="Liberation Mono" font-size="10.5" letter-spacing="0.700" fill="#ff0000" stroke="#ff0000" stroke-width="0.25">):</text>
<text x="436.0" y="715" font-family="Liberation Mono" font-size="10.5" letter-spacing="0.700" fill="#008000" stroke="#008000" stroke-width="0.25">make</text>
<path d="M219.5 799 V778 q0 -2 2 -2 H286 q2 0 2 2 V799" fill="#fcfcfe"/>
<rect x="218" y="776" width="1" height="23" fill="#919b9c" />
<rect x="288" y="779" width="1" height="19" fill="#919b9c" />
<path d="M219 779 V778 q0 -2 2 -2 H286 q2 0 2 2 V779 z" fill="#ffc83c"/>
<rect x="220" y="776" width="67" height="1" fill="#e68b2c" />
<defs><linearGradient id="tab1" x1="0" y1="0" x2="0" y2="1"><stop offset="0" stop-color="#ffffff"/><stop offset="1" stop-color="#ecebe5"/></linearGradient></defs>
<path d="M289.5 798 V780.5 q0 -2 2 -2 H357 q2 0 2 2 V798" fill="url(#tab1)" stroke="#a8b4c0"/>
<defs><linearGradient id="tab2" x1="0" y1="0" x2="0" y2="1"><stop offset="0" stop-color="#ffffff"/><stop offset="1" stop-color="#ecebe5"/></linearGradient></defs>
<path d="M360.5 798 V780.5 q0 -2 2 -2 H415 q2 0 2 2 V798" fill="url(#tab2)" stroke="#a8b4c0"/>
<defs><linearGradient id="tab3" x1="0" y1="0" x2="0" y2="1"><stop offset="0" stop-color="#ffffff"/><stop offset="1" stop-color="#ecebe5"/></linearGradient></defs>
<path d="M419.5 798 V780.5 q0 -2 2 -2 H485 q2 0 2 2 V798" fill="url(#tab3)" stroke="#a8b4c0"/>
<defs><linearGradient id="tab4" x1="0" y1="0" x2="0" y2="1"><stop offset="0" stop-color="#ffffff"/><stop offset="1" stop-color="#ecebe5"/></linearGradient></defs>
<path d="M489.5 798 V780.5 q0 -2 2 -2 H548 q2 0 2 2 V798" fill="url(#tab4)" stroke="#a8b4c0"/>
<defs><linearGradient id="tab5" x1="0" y1="0" x2="0" y2="1"><stop offset="0" stop-color="#ffffff"/><stop offset="1" stop-color="#ecebe5"/></linearGradient></defs>
<path d="M552.5 798 V780.5 q0 -2 2 -2 H655 q2 0 2 2 V798" fill="url(#tab5)" stroke="#a8b4c0"/>
<defs><linearGradient id="tab6" x1="0" y1="0" x2="0" y2="1"><stop offset="0" stop-color="#ffffff"/><stop offset="1" stop-color="#ecebe5"/></linearGradient></defs>
<path d="M659.5 798 V780.5 q0 -2 2 -2 H731 q2 0 2 2 V798" fill="url(#tab6)" stroke="#a8b4c0"/>
<defs><linearGradient id="tab7" x1="0" y1="0" x2="0" y2="1"><stop offset="0" stop-color="#ffffff"/><stop offset="1" stop-color="#ecebe5"/></linearGradient></defs>
<path d="M735.5 798 V780.5 q0 -2 2 -2 H792 q2 0 2 2 V798" fill="url(#tab7)" stroke="#a8b4c0"/>
<defs><linearGradient id="tab8" x1="0" y1="0" x2="0" y2="1"><stop offset="0" stop-color="#ffffff"/><stop offset="1" stop-color="#ecebe5"/></linearGradient></defs>
<path d="M796.5 798 V780.5 q0 -2 2 -2 H870 q2 0 2 2 V798" fill="url(#tab8)" stroke="#a8b4c0"/>
<rect x="4" y="799" width="959" height="1" fill="#ffffff" />
<rect x="227.5" y="782.5" width="15" height="13" fill="#eef0ff" stroke="#2a5ad8"/>
<rect x="228" y="783" width="14" height="2" fill="#4a7ae8" />
<rect x="230" y="787" width="10" height="1" fill="#8a8a8a" />
<rect x="230" y="789" width="10" height="1" fill="#8a8a8a" />
<rect x="230" y="791" width="10" height="1" fill="#8a8a8a" />
<rect x="230" y="793" width="10" height="1" fill="#8a8a8a" />
<text x="250" y="793" font-size="12" stroke="#000" stroke-width="0.2" textLength="31" lengthAdjust="spacingAndGlyphs" >Output</text>
<rect x="293.5" y="781.5" width="11" height="12" fill="#f2f4ff" stroke="#2a62e0"/>
<rect x="295" y="784" width="5" height="1" fill="#a0a8c8" />
<rect x="295" y="786" width="5" height="1" fill="#a0a8c8" />
<rect x="295" y="788" width="5" height="1" fill="#a0a8c8" />
<path d="M296 790 L304 782 L307 785 L299 793 Z" fill="#38c030" stroke="#107a10" stroke-width="0.7"/>
<path d="M296 790 L299 793 L295 794 Z" fill="#e8d040"/>
<path d="M304 782 L305.5 780.5 L308.5 783.5 L307 785 Z" fill="#e84020"/>
<text x="315.5" y="791" font-size="12" stroke="#000" stroke-width="0.2" textLength="38.5" lengthAdjust="spacingAndGlyphs" >Diagram</text>
<ellipse cx="373.5" cy="786" rx="6.5" ry="4.5" fill="#1f86e0" stroke="#0a4fa0" stroke-width="0.9"/>
<text x="388.4" y="791" font-size="12" stroke="#000" stroke-width="0.2" textLength="24.6" lengthAdjust="spacingAndGlyphs" >Class</text>
<path d="M428.5 784.5 h3 v3 h3 v3 h-3 v3 h-3 v-3 h-3 v-3 h3 z" fill="#30a030" stroke="#0a600a" stroke-width="0.9"/>
<rect x="434" y="779" width="6" height="1" fill="#404040" />
<rect x="434" y="781" width="6" height="1" fill="#404040" />
<rect x="434" y="783" width="6" height="1" fill="#404040" />
<text x="447.5" y="791" font-size="12" stroke="#000" stroke-width="0.2" textLength="35.5" lengthAdjust="spacingAndGlyphs" >Feature</text>
<rect x="495.5" y="780.5" width="15" height="13" fill="#eef0ff" stroke="#2a5ad8"/>
<rect x="496" y="781" width="14" height="2" fill="#4a7ae8" />
<circle cx="504" cy="789" r="5" fill="#d03030"/><path d="M504 789 l5 0 a5 5 0 0 1 -8 4 z" fill="#e0d020"/><path d="M504 789 l-3 4 a5 5 0 0 1 -1 -7 z" fill="#30a030"/>
<text x="517.7" y="791" font-size="12" stroke="#000" stroke-width="0.2" textLength="28" lengthAdjust="spacingAndGlyphs" >Metric</text>
<rect x="558.5" y="780.5" width="15" height="13" fill="#eef0ff" stroke="#2a5ad8"/>
<rect x="559" y="781" width="14" height="2" fill="#4a7ae8" />
<text x="561" y="791" font-size="7" fill="#203080" stroke="#203080" stroke-width="0.2" >&gt;..≡</text>
<text x="580.5" y="791" font-size="12" stroke="#000" stroke-width="0.2" textLength="72.5" lengthAdjust="spacingAndGlyphs" >External Output</text>
<rect x="665.5" y="780.5" width="15" height="13" fill="#eef0ff" stroke="#2a5ad8"/>
<rect x="666" y="781" width="14" height="2" fill="#4a7ae8" />
<text x="667" y="791" font-size="8" font-weight="bold" fill="#20a020" >c</text>
<rect x="673" y="785" width="6" height="1" fill="#5a6ab0" />
<rect x="673" y="787" width="6" height="1" fill="#5a6ab0" />
<rect x="673" y="789" width="6" height="1" fill="#5a6ab0" />
<text x="687.5" y="791" font-size="12" stroke="#000" stroke-width="0.2" textLength="42" lengthAdjust="spacingAndGlyphs" >C Output</text>
<circle cx="749" cy="786" r="7" fill="#e04818" stroke="#b02808" stroke-width="0.8"/>
<path d="M746 783 l6 6 M752 783 l-6 6" stroke="#fff" stroke-width="2"/>
<text x="763.5" y="791" font-size="12" stroke="#000" stroke-width="0.2" textLength="27" lengthAdjust="spacingAndGlyphs" >Errors</text>
<path d="M810 779.5 l7.5 13.5 h-15 z" fill="#f8d820" stroke="#404020" stroke-width="0.8"/>
<rect x="809" y="783" width="2" height="6" fill="#000" />
<rect x="809" y="790" width="2" height="2" fill="#000" />
<text x="824.3" y="791" font-size="12" stroke="#000" stroke-width="0.2" textLength="45" lengthAdjust="spacingAndGlyphs" >Warnings</text>
<rect x="4" y="802" width="705" height="1" fill="#aca899" />
<rect x="4" y="802" width="1" height="18" fill="#aca899" />
<rect x="4" y="819" width="705" height="1" fill="#ffffff" />
<rect x="708" y="802" width="1" height="18" fill="#ffffff" />
<rect x="712.5" y="803.5" width="97" height="15" rx="2.5" fill="#fff" stroke="#6a6a6a"/>
<rect x="813" y="802" width="38" height="1" fill="#aca899" />
<rect x="813" y="802" width="1" height="18" fill="#aca899" />
<rect x="813" y="819" width="38" height="1" fill="#ffffff" />
<rect x="850" y="802" width="1" height="18" fill="#ffffff" />
<text x="816.6" y="815" font-size="11" stroke="#000" stroke-width="0.2" textLength="29.8" lengthAdjust="spacingAndGlyphs" >simple</text>
<rect x="853" y="802" width="50" height="1" fill="#aca899" />
<rect x="853" y="802" width="1" height="18" fill="#aca899" />
<rect x="853" y="819" width="50" height="1" fill="#ffffff" />
<rect x="902" y="802" width="1" height="18" fill="#ffffff" />
<text x="869" y="815" font-size="11" stroke="#000" stroke-width="0.2" textLength="14" lengthAdjust="spacingAndGlyphs" >9:1</text>
<rect x="904" y="802" width="20" height="1" fill="#aca899" />
<rect x="904" y="802" width="1" height="18" fill="#aca899" />
<rect x="904" y="819" width="20" height="1" fill="#ffffff" />
<rect x="923" y="802" width="1" height="18" fill="#ffffff" />
<rect x="907.5" y="806.5" width="11" height="12" fill="#f2f4ff" stroke="#2a62e0"/>
<rect x="909" y="809" width="5" height="1" fill="#a0a8c8" />
<rect x="909" y="811" width="5" height="1" fill="#a0a8c8" />
<rect x="909" y="813" width="5" height="1" fill="#a0a8c8" />
<path d="M910 815 L918 807 L921 810 L913 818 Z" fill="#38c030" stroke="#107a10" stroke-width="0.7"/>
<path d="M910 815 L913 818 L909 819 Z" fill="#e8d040"/>
<path d="M918 807 L919.5 805.5 L922.5 808.5 L921 810 Z" fill="#e84020"/>
<rect x="925" y="802" width="19" height="1" fill="#aca899" />
<rect x="925" y="802" width="1" height="18" fill="#aca899" />
<rect x="925" y="819" width="19" height="1" fill="#ffffff" />
<rect x="943" y="802" width="1" height="18" fill="#ffffff" />
<path d="M927.5 812.5 l7 -3 l7 3 l-7 4 z" fill="#c8d0e8" stroke="#6a7aa8" stroke-width="0.8"/>
<path d="M927.5 814.5 l7 4 l7 -4 v2 l-7 4 l-7 -4 z" fill="#8a9ac0" stroke="#5a6a98" stroke-width="0.6"/>
<path d="M930 810 l3.5 4 l7 -8" stroke="#20a020" stroke-width="2.6" fill="none"/>
<rect x="945" y="802" width="18" height="1" fill="#aca899" />
<rect x="945" y="802" width="1" height="18" fill="#aca899" />
<rect x="945" y="819" width="18" height="1" fill="#ffffff" />
<rect x="962" y="802" width="1" height="18" fill="#ffffff" />
</svg>
</body></html>
